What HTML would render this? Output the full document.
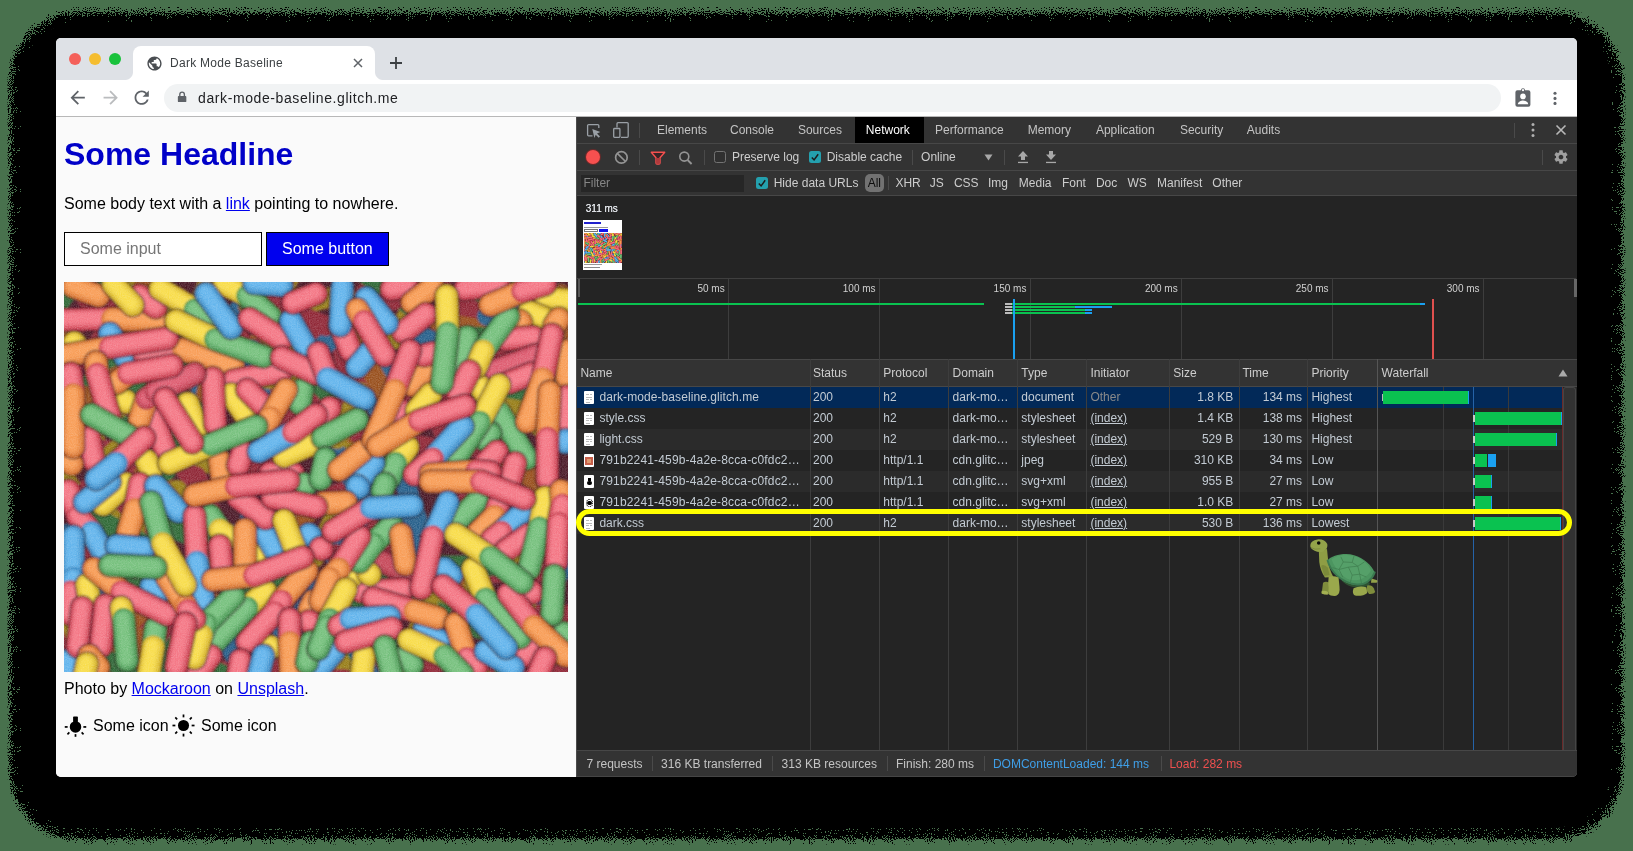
<!DOCTYPE html>
<html><head><meta charset="utf-8"><title>Dark Mode Baseline</title>
<style>
*{box-sizing:border-box;margin:0;padding:0}
html,body{width:1633px;height:851px;overflow:hidden}
body{background:#48714d;font-family:"Liberation Sans",sans-serif;position:relative}
.abs,.t{position:absolute}
.t{white-space:nowrap;line-height:20px;font-size:12px}
#shadow{position:absolute;left:16px;top:18px;width:1600px;height:815px;background:#000;border-radius:63px;box-shadow:0 0 8px 5.5px #000}
#win{opacity:.9999;position:absolute;left:56px;top:38px;width:1521px;height:739px;border-radius:5px;overflow:hidden;background:#fafafa}
/* browser chrome */
#tabstrip{position:absolute;left:0;top:0;width:1521px;height:42px;background:#dee1e6}
#tab{position:absolute;left:77px;top:8px;width:242px;height:34px;background:#fff;border-radius:8px 8px 0 0}
#toolbar{position:absolute;left:0;top:42px;width:1521px;height:37px;background:#fff;border-bottom:1px solid #b8b8b8}
#omni{position:absolute;left:108px;top:4px;width:1337px;height:28px;border-radius:14px;background:#f1f3f4}
.tl{position:absolute;top:15px;width:12px;height:12px;border-radius:50%}
/* page */
#page{position:absolute;left:0;top:79px;width:520px;height:660px;background:#fafafa;color:#000}
#page .t{font-size:16px;line-height:20px}
a.l{color:#0000ee;text-decoration:underline}
/* devtools */
#dt{position:absolute;left:520px;top:79px;width:1001px;height:660px;background:#242424;color:#ccc}
#dt .t{color:#cdcdcd;margin-left:-0.6px}
#dt .row .t{color:#c3cbd3}
.bar{position:absolute;left:0;width:1001px;background:#333}
.vsep{position:absolute;width:1px;background:#4a4a4a}
.cb{position:absolute;width:12px;height:12px;border-radius:2.5px}
.row{position:absolute;left:0;width:986px;height:21px}
.fi{position:absolute;left:8px;top:4px;width:10.200px;height:13px;background:#fff;border-radius:1px}
.fi i{position:absolute;left:2px;height:1px;background:#bbb}
.col{position:absolute;top:242px;width:1px;height:392px;background:#3d3d3d}
.bar2{position:absolute;height:12.600px;background:#06c354}
</style></head><body>
<svg class="abs" style="left:0;top:0" width="1633" height="851" viewBox="0 0 1633 851"><defs><filter id="dith" filterUnits="userSpaceOnUse" x="0" y="0" width="1633" height="851" color-interpolation-filters="sRGB"><feGaussianBlur in="SourceAlpha" stdDeviation="3.800" result="b"/><feTurbulence type="fractalNoise" baseFrequency="0.95" numOctaves="1" seed="11" result="n"/><feColorMatrix in="n" type="matrix" values="0 0 0 0 0  0 0 0 0 0  0 0 0 0 0  2.6 0 0 0 -0.8" result="na"/><feComposite in="b" in2="na" operator="arithmetic" k1="0" k2="1" k3="1" k4="-1" result="s"/><feComponentTransfer in="s"><feFuncA type="linear" slope="400" intercept="0"/></feComponentTransfer></filter><clipPath id="shc"><rect x="7.500" y="7" width="1618" height="837.500" rx="72"/></clipPath></defs><g clip-path="url(#shc)"><rect x="10.300" y="13" width="1611.400" height="826" rx="68" fill="#000" filter="url(#dith)"/></g><rect x="21" y="22" width="1590" height="806" rx="58" fill="#000"/></svg>
<div id="win">
<div id="tabstrip">
 <div class="tl" style="left:13px;background:#f4605a"></div>
 <div class="tl" style="left:33px;background:#f5bd2f"></div>
 <div class="tl" style="left:53px;background:#19c23c"></div>
 <div class="abs" style="left:69px;top:34px;width:8px;height:8px;background:radial-gradient(circle at 0 0,rgba(255,255,255,0) 7.5px,#fff 8.5px)"></div>
 <div class="abs" style="left:319px;top:34px;width:8px;height:8px;background:radial-gradient(circle at 100% 0,rgba(255,255,255,0) 7.5px,#fff 8.5px)"></div>
 <div id="tab"></div>
 <svg class="abs" style="left:89.500px;top:16.500px" width="17" height="17" viewBox="0 0 24 24"><path fill="#4a4d51" d="M12 2C6.48 2 2 6.48 2 12s4.48 10 10 10 10-4.48 10-10S17.52 2 12 2zm-1 17.93c-3.95-.49-7-3.85-7-7.93 0-.62.08-1.21.21-1.79L9 15v1c0 1.1.9 2 2 2v1.93zm6.9-2.54c-.26-.81-1-1.39-1.9-1.39h-1v-3c0-.55-.45-1-1-1H8v-2h2c.55 0 1-.45 1-1V7h2c1.100 0 2-.9 2-2v-.41c2.930 1.190 5 4.060 5 7.410 0 2.080-.8 3.970-2.100 5.390z"/></svg>
 <div class="t" style="left:114px;top:15px;font-size:12px;color:#3c4043;letter-spacing:0.27px">Dark Mode Baseline</div>
 <svg class="abs" style="left:296px;top:19px" width="12" height="12" viewBox="0 0 12 12"><path d="M2 2l8 8M10 2l-8 8" stroke="#5f6368" stroke-width="1.5" fill="none"/></svg>
 <svg class="abs" style="left:333px;top:18px" width="14" height="14" viewBox="0 0 14 14"><path d="M7 1v12M1 7h12" stroke="#3c4043" stroke-width="1.8" fill="none"/></svg>
</div>
<div id="toolbar">
 <svg class="abs" style="left:11.300px;top:7.300px" width="21.400" height="21.400" viewBox="0 0 24 24"><path fill="#5f6368" d="M20 11H7.830l5.590-5.590L12 4l-8 8 8 8 1.410-1.410L7.830 13H20v-2z"/></svg>
 <svg class="abs" style="left:43.500px;top:7.300px" width="21.400" height="21.400" viewBox="0 0 24 24"><path fill="#babcbe" d="M12 4l-1.410 1.410L16.170 11H4v2h12.170l-5.580 5.590L12 20l8-8z"/></svg>
 <svg class="abs" style="left:75.300px;top:7.300px" width="21.400" height="21.400" viewBox="0 0 24 24"><path fill="#5f6368" d="M17.650 6.350C16.200 4.900 14.210 4 12 4c-4.420 0-7.990 3.580-7.990 8s3.570 8 7.990 8c3.730 0 6.840-2.550 7.730-6h-2.080c-.82 2.330-3.040 4-5.650 4-3.310 0-6-2.690-6-6s2.690-6 6-6c1.660 0 3.140.69 4.220 1.780L13 11h7V4l-2.350 2.350z"/></svg>
 <div id="omni"></div>
 <svg class="abs" style="left:121px;top:11.300px" width="10.200" height="11.900" viewBox="0 0 12 14"><path fill="#5f6368" d="M2.500 6V4a3.500 3.500 0 0 1 7 0v2h.5a1 1 0 0 1 1 1v5a1 1 0 0 1-1 1H2a1 1 0 0 1-1-1V7a1 1 0 0 1 1-1zm1.600 0h3.800V4a1.900 1.900 0 0 0-3.800 0z"/></svg>
 <div class="t" style="left:142px;top:8px;font-size:14px;color:#202124;letter-spacing:0.6px">dark-mode-baseline.glitch.me</div>
 <svg class="abs" style="left:1458px;top:8px" width="18" height="20" viewBox="0 0 18 20"><path fill="#5f6368" d="M7 2.300a2 2 0 0 1 4 0H14.400a2 2 0 0 1 2 2V16.800a2 2 0 0 1-2 2H3.400a2 2 0 0 1-2-2V4.300a2 2 0 0 1 2-2z"/><circle cx="9" cy="2.200" r="1.100" fill="#fff"/><circle cx="9" cy="8.400" r="2.800" fill="#fff"/><path fill="#fff" d="M3.800 16.300c0-2.600 3.400-3.900 5.200-3.900s5.200 1.300 5.200 3.900z"/></svg>
 <svg class="abs" style="left:1497px;top:9px" width="4" height="18" viewBox="0 0 4 18"><circle cx="2" cy="4.300" r="1.550" fill="#5f6368"/><circle cx="2" cy="9.400" r="1.550" fill="#5f6368"/><circle cx="2" cy="14.400" r="1.550" fill="#5f6368"/></svg>
</div>
<div id="page">
 <div class="t" style="left:8px;top:18.700px;font-size:32px;line-height:37px;font-weight:bold;color:#0000c8">Some Headline</div>
 <div class="t" style="left:8px;top:77px">Some body text with a <a class="l">link</a> pointing to nowhere.</div>
 <div class="abs" style="left:8px;top:115px;width:198px;height:34px;background:#fff;border:1px solid #000"></div>
 <div class="t" style="left:24px;top:122px;color:#767676">Some input</div>
 <div class="abs" style="left:210px;top:115px;width:123px;height:34px;background:#0000ee;border:1px solid #000"></div>
 <div class="t" style="left:226px;top:122px;color:#fff">Some button</div>
 <div class="abs" style="left:8px;top:165px;width:504px;height:390px;background:#c86a78;overflow:hidden">
<svg width="504" height="390" viewBox="0 0 504 390" style="position:absolute;left:0;top:0">
<defs><filter id="sug" x="0" y="0" width="100%" height="100%"><feTurbulence type="fractalNoise" baseFrequency="0.9" numOctaves="2" seed="3" result="n"/><feColorMatrix in="n" type="matrix" values="0 0 0 0 1  0 0 0 0 1  0 0 0 0 1  0.9 0.9 0 0 -0.62" result="w"/><feComposite in="w" in2="SourceGraphic" operator="over"/></filter><filter id="bl"><feGaussianBlur stdDeviation="0.9"/></filter><filter id="hb" x="-50%" y="-50%" width="200%" height="200%"><feGaussianBlur stdDeviation="2.6"/></filter></defs>
<rect width="504" height="390" fill="#4a1826"/>
<g id="cg" stroke-linecap="round" stroke-linejoin="round" fill="none" filter="url(#bl)">
<path d="M169 35L151 69" stroke="#977d18" stroke-width="20"/>
<path d="M60 223L18 235" stroke="#8f2634" stroke-width="20"/>
<path d="M193 11L242 26" stroke="#984f1e" stroke-width="20"/>
<path d="M298 352L275 405" stroke="#8f2634" stroke-width="20"/>
<path d="M311 151L274 154" stroke="#984f1e" stroke-width="20"/>
<path d="M63 134L56 190" stroke="#977d18" stroke-width="20"/>
<path d="M425 36L410 93" stroke="#8f2634" stroke-width="20"/>
<path d="M47 253L35 311" stroke="#255e8a" stroke-width="20"/>
<path d="M331 142L362 189" stroke="#255e8a" stroke-width="20"/>
<path d="M152 75L207 109" stroke="#8f2634" stroke-width="20"/>
<path d="M320 193L262 217" stroke="#8f2634" stroke-width="20"/>
<path d="M310 -1L308 41" stroke="#8f2634" stroke-width="20"/>
<path d="M40 187L99 194" stroke="#984f1e" stroke-width="20"/>
<path d="M303 300L262 327" stroke="#8f2634" stroke-width="20"/>
<path d="M297 195L306 261" stroke="#8f2634" stroke-width="20"/>
<path d="M208 257L268 268" stroke="#2f6835" stroke-width="20"/>
<path d="M288 239L298 300" stroke="#2f6835" stroke-width="20"/>
<path d="M159 350L185 402" stroke="#255e8a" stroke-width="20"/>
<path d="M0 296L42 314" stroke="#255e8a" stroke-width="20"/>
<path d="M449 181L492 206" stroke="#8f2634" stroke-width="20"/>
<path d="M474 316L432 335" stroke="#255e8a" stroke-width="20"/>
<path d="M499 249L515 291" stroke="#8f2634" stroke-width="20"/>
<path d="M62 67L102 103" stroke="#977d18" stroke-width="20"/>
<path d="M61 93L110 118" stroke="#977d18" stroke-width="20"/>
<path d="M302 358L271 403" stroke="#977d18" stroke-width="20"/>
<path d="M329 260L338 327" stroke="#984f1e" stroke-width="20"/>
<path d="M339 195L355 243" stroke="#255e8a" stroke-width="20"/>
<path d="M301 11L344 20" stroke="#8f2634" stroke-width="20"/>
<path d="M21 227L74 245" stroke="#977d18" stroke-width="20"/>
<path d="M10 136L77 142" stroke="#977d18" stroke-width="20"/>
<path d="M216 246L159 254" stroke="#255e8a" stroke-width="20"/>
<path d="M81 337L28 339" stroke="#255e8a" stroke-width="20"/>
<path d="M176 27L131 71" stroke="#255e8a" stroke-width="20"/>
<path d="M389 54L459 59" stroke="#977d18" stroke-width="20"/>
<path d="M210 264L149 281" stroke="#8f2634" stroke-width="20"/>
<path d="M516 325L490 362" stroke="#8f2634" stroke-width="20"/>
<path d="M445 118L487 154" stroke="#977d18" stroke-width="20"/>
<path d="M192 62L133 101" stroke="#984f1e" stroke-width="20"/>
<path d="M82 57L102 119" stroke="#8f2634" stroke-width="20"/>
<path d="M243 134L280 137" stroke="#8f2634" stroke-width="20"/>
<path d="M245 47L230 92" stroke="#984f1e" stroke-width="20"/>
<path d="M505 392L457 399" stroke="#8f2634" stroke-width="20"/>
<path d="M31 159L57 206" stroke="#977d18" stroke-width="20"/>
<path d="M445 158L415 215" stroke="#8f2634" stroke-width="20"/>
<path d="M417 10L438 68" stroke="#8f2634" stroke-width="20"/>
<path d="M259 48L222 78" stroke="#984f1e" stroke-width="20"/>
<path d="M482 255L489 317" stroke="#8f2634" stroke-width="20"/>
<path d="M351 52L389 68" stroke="#255e8a" stroke-width="20"/>
<path d="M443 31L382 68" stroke="#2f6835" stroke-width="20"/>
<path d="M484 36L478 72" stroke="#984f1e" stroke-width="20"/>
<path d="M502 222L496 291" stroke="#255e8a" stroke-width="20"/>
<path d="M524 63L490 77" stroke="#8f2634" stroke-width="20"/>
<path d="M150 67L137 110" stroke="#255e8a" stroke-width="20"/>
<path d="M450 -10L404 40" stroke="#2f6835" stroke-width="20"/>
<path d="M287 327L304 394" stroke="#977d18" stroke-width="20"/>
<path d="M60 19L57 86" stroke="#984f1e" stroke-width="20"/>
<path d="M103 -21L69 4" stroke="#255e8a" stroke-width="20"/>
<path d="M285 33L344 45" stroke="#977d18" stroke-width="20"/>
<path d="M255 302L308 321" stroke="#8f2634" stroke-width="20"/>
<path d="M65 -1L115 15" stroke="#8f2634" stroke-width="20"/>
<path d="M383 336L393 393" stroke="#977d18" stroke-width="20"/>
<path d="M290 51L325 93" stroke="#984f1e" stroke-width="20"/>
<path d="M260 349L221 403" stroke="#8f2634" stroke-width="20"/>
<path d="M453 341L494 372" stroke="#255e8a" stroke-width="20"/>
<path d="M32 166L75 176" stroke="#8f2634" stroke-width="20"/>
<path d="M72 102L131 126" stroke="#2f6835" stroke-width="20"/>
<path d="M313 126L342 155" stroke="#255e8a" stroke-width="20"/>
<path d="M97 355L113 406" stroke="#2f6835" stroke-width="20"/>
<path d="M420 30L432 83" stroke="#8f2634" stroke-width="20"/>
<path d="M187 129L234 143" stroke="#8f2634" stroke-width="20"/>
<path d="M256 169L304 172" stroke="#977d18" stroke-width="20"/>
<path d="M112 372L177 396" stroke="#8f2634" stroke-width="20"/>
<path d="M487 19L512 47" stroke="#984f1e" stroke-width="20"/>
<path d="M113 282L57 318" stroke="#2f6835" stroke-width="20"/>
<path d="M388 80L450 112" stroke="#977d18" stroke-width="20"/>
<path d="M228 99L270 149" stroke="#8f2634" stroke-width="20"/>
<path d="M242 14L184 25" stroke="#984f1e" stroke-width="20"/>
<path d="M109 225L144 254" stroke="#8f2634" stroke-width="20"/>
<path d="M234 95L222 163" stroke="#8f2634" stroke-width="20"/>
<path d="M337 -20L294 35" stroke="#8f2634" stroke-width="20"/>
<path d="M156 58L99 70" stroke="#977d18" stroke-width="20"/>
<path d="M388 88L388 130" stroke="#8f2634" stroke-width="20"/>
<path d="M393 396L429 400" stroke="#977d18" stroke-width="20"/>
<path d="M276 33L282 102" stroke="#8f2634" stroke-width="20"/>
<path d="M348 232L322 281" stroke="#255e8a" stroke-width="20"/>
<path d="M481 102L516 130" stroke="#8f2634" stroke-width="20"/>
<path d="M437 257L416 303" stroke="#8f2634" stroke-width="20"/>
<path d="M475 332L534 334" stroke="#8f2634" stroke-width="20"/>
<path d="M228 -9L203 34" stroke="#977d18" stroke-width="20"/>
<path d="M325 90L358 122" stroke="#255e8a" stroke-width="20"/>
<path d="M63 100L112 101" stroke="#8f2634" stroke-width="20"/>
<path d="M474 190L525 239" stroke="#8f2634" stroke-width="20"/>
<path d="M95 48L114 82" stroke="#8f2634" stroke-width="20"/>
<path d="M254 54L253 90" stroke="#8f2634" stroke-width="20"/>
<path d="M425 25L411 73" stroke="#8f2634" stroke-width="20"/>
<path d="M157 59L142 112" stroke="#984f1e" stroke-width="20"/>
<path d="M94 338L49 374" stroke="#984f1e" stroke-width="20"/>
<path d="M133 380L189 408" stroke="#2f6835" stroke-width="20"/>
<path d="M83 307L49 349" stroke="#255e8a" stroke-width="20"/>
<path d="M350 311L399 335" stroke="#977d18" stroke-width="20"/>
<path d="M258 322L318 325" stroke="#984f1e" stroke-width="20"/>
<path d="M470 252L445 288" stroke="#8f2634" stroke-width="20"/>
<path d="M37 248L-13 254" stroke="#255e8a" stroke-width="20"/>
<path d="M294 219L271 275" stroke="#255e8a" stroke-width="20"/>
<path d="M94 170L162 185" stroke="#977d18" stroke-width="20"/>
<path d="M57 187L20 225" stroke="#984f1e" stroke-width="20"/>
<path d="M43 83L15 115" stroke="#2f6835" stroke-width="20"/>
<path d="M348 170L313 188" stroke="#2f6835" stroke-width="20"/>
<path d="M149 -11L132 29" stroke="#977d18" stroke-width="20"/>
<path d="M83 77L51 111" stroke="#977d18" stroke-width="20"/>
<path d="M58 152L62 223" stroke="#8f2634" stroke-width="20"/>
<path d="M336 245L369 289" stroke="#255e8a" stroke-width="20"/>
<path d="M262 304L206 305" stroke="#8f2634" stroke-width="20"/>
<path d="M476 372L529 375" stroke="#984f1e" stroke-width="20"/>
<path d="M280 397L231 398" stroke="#8f2634" stroke-width="20"/>
<path d="M45 11L13 43" stroke="#8f2634" stroke-width="20"/>
<path d="M60 292L59 360" stroke="#2f6835" stroke-width="20"/>
<path d="M205 185L158 204" stroke="#8f2634" stroke-width="20"/>
<path d="M-12 168L-5 215" stroke="#8f2634" stroke-width="20"/>
<path d="M186 135L230 153" stroke="#8f2634" stroke-width="20"/>
<path d="M351 321L416 347" stroke="#2f6835" stroke-width="20"/>
<path d="M-17 280L10 307" stroke="#255e8a" stroke-width="20"/>
<path d="M502 208L524 255" stroke="#8f2634" stroke-width="20"/>
<path d="M408 100L467 110" stroke="#2f6835" stroke-width="20"/>
<path d="M462 72L499 112" stroke="#8f2634" stroke-width="20"/>
<path d="M391 294L399 330" stroke="#984f1e" stroke-width="20"/>
<path d="M348 359L293 370" stroke="#2f6835" stroke-width="20"/>
<path d="M24 345L40 401" stroke="#8f2634" stroke-width="20"/>
<path d="M293 102L362 113" stroke="#8f2634" stroke-width="20"/>
<path d="M65 143L94 178" stroke="#2f6835" stroke-width="20"/>
<path d="M513 76L491 117" stroke="#977d18" stroke-width="20"/>
<path d="M349 22L332 57" stroke="#977d18" stroke-width="20"/>
<path d="M438 172L491 216" stroke="#984f1e" stroke-width="20"/>
<path d="M210 36L242 58" stroke="#8f2634" stroke-width="20"/>
<path d="M268 91L294 151" stroke="#8f2634" stroke-width="20"/>
<path d="M448 273L462 322" stroke="#977d18" stroke-width="20"/>
<path d="M119 82L81 120" stroke="#977d18" stroke-width="20"/>
<path d="M497 12L497 71" stroke="#984f1e" stroke-width="20"/>
<path d="M458 20L411 36" stroke="#2f6835" stroke-width="20"/>
<path d="M254 366L194 397" stroke="#8f2634" stroke-width="20"/>
<path d="M81 142L33 186" stroke="#977d18" stroke-width="20"/>
<path d="M281 12L213 28" stroke="#977d18" stroke-width="20"/>
<path d="M424 375L452 403" stroke="#8f2634" stroke-width="20"/>
<path d="M39 377L101 399" stroke="#2f6835" stroke-width="20"/>
<path d="M325 276L333 331" stroke="#8f2634" stroke-width="20"/>
<path d="M-5 23L-13 60" stroke="#2f6835" stroke-width="20"/>
<path d="M128 22L170 63" stroke="#2f6835" stroke-width="20"/>
<path d="M370 2L411 59" stroke="#8f2634" stroke-width="20"/>
<path d="M199 64L188 99" stroke="#8f2634" stroke-width="20"/>
<path d="M494 76L530 132" stroke="#8f2634" stroke-width="20"/>
<path d="M214 62L264 111" stroke="#2f6835" stroke-width="20"/>
<path d="M303 -7L358 32" stroke="#2f6835" stroke-width="20"/>
<path d="M227 66L193 125" stroke="#8f2634" stroke-width="20"/>
<path d="M264 256L233 294" stroke="#255e8a" stroke-width="20"/>
<path d="M112 297L75 337" stroke="#8f2634" stroke-width="20"/>
<path d="M266 58L234 87" stroke="#255e8a" stroke-width="20"/>
<path d="M85 274L127 330" stroke="#255e8a" stroke-width="20"/>
<path d="M308 323L311 392" stroke="#8f2634" stroke-width="20"/>
<path d="M480 29L494 71" stroke="#977d18" stroke-width="20"/>
<path d="M40 7L89 16" stroke="#2f6835" stroke-width="20"/>
<path d="M488 290L418 291" stroke="#8f2634" stroke-width="20"/>
<path d="M92 231L88 284" stroke="#8f2634" stroke-width="20"/>
<path d="M329 123L347 167" stroke="#8f2634" stroke-width="20"/>
<path d="M22 16L72 28" stroke="#8f2634" stroke-width="20"/>
<path d="M272 272L296 331" stroke="#8f2634" stroke-width="20"/>
<path d="M395 163L447 171" stroke="#8f2634" stroke-width="20"/>
<path d="M257 146L290 200" stroke="#255e8a" stroke-width="20"/>
<path d="M32 141L-21 176" stroke="#8f2634" stroke-width="20"/>
<path d="M202 169L171 191" stroke="#8f2634" stroke-width="20"/>
<path d="M370 338L393 378" stroke="#977d18" stroke-width="20"/>
<path d="M32 267L-7 325" stroke="#8f2634" stroke-width="20"/>
<path d="M20 292L-36 307" stroke="#8f2634" stroke-width="20"/>
<path d="M-0 51L5 121" stroke="#984f1e" stroke-width="20"/>
<path d="M187 67L198 119" stroke="#255e8a" stroke-width="20"/>
<path d="M108 295L64 343" stroke="#984f1e" stroke-width="20"/>
<path d="M93 76L45 98" stroke="#984f1e" stroke-width="20"/>
<path d="M374 4L426 41" stroke="#8f2634" stroke-width="20"/>
<path d="M202 229L205 284" stroke="#8f2634" stroke-width="20"/>
<path d="M526 351L481 353" stroke="#8f2634" stroke-width="20"/>
<path d="M135 161L64 164" stroke="#8f2634" stroke-width="20"/>
<path d="M124 133L102 189" stroke="#2f6835" stroke-width="20"/>
<path d="M296 285L249 329" stroke="#8f2634" stroke-width="20"/>
<path d="M132 194L156 251" stroke="#8f2634" stroke-width="20"/>
<path d="M203 51L237 82" stroke="#977d18" stroke-width="20"/>
<path d="M73 1L104 33" stroke="#977d18" stroke-width="20"/>
<path d="M128 290L95 353" stroke="#8f2634" stroke-width="20"/>
<path d="M-27 335L12 369" stroke="#8f2634" stroke-width="20"/>
<path d="M-9 103L31 118" stroke="#984f1e" stroke-width="20"/>
<path d="M282 340L309 402" stroke="#255e8a" stroke-width="20"/>
<path d="M315 292L297 323" stroke="#2f6835" stroke-width="20"/>
<path d="M283 229L321 260" stroke="#8f2634" stroke-width="20"/>
<path d="M-18 396L44 404" stroke="#8f2634" stroke-width="20"/>
<path d="M410 302L424 349" stroke="#977d18" stroke-width="20"/>
<path d="M176 57L131 90" stroke="#8f2634" stroke-width="20"/>
<path d="M214 298L194 334" stroke="#977d18" stroke-width="20"/>
<path d="M52 36L23 78" stroke="#8f2634" stroke-width="20"/>
<path d="M309 156L371 166" stroke="#8f2634" stroke-width="20"/>
<path d="M231 -24L183 19" stroke="#2f6835" stroke-width="20"/>
<path d="M79 278L108 299" stroke="#8f2634" stroke-width="20"/>
<path d="M202 294L222 359" stroke="#255e8a" stroke-width="20"/>
<path d="M375 40L415 47" stroke="#984f1e" stroke-width="20"/>
<path d="M476 4L457 49" stroke="#977d18" stroke-width="20"/>
<path d="M62 122L98 143" stroke="#8f2634" stroke-width="20"/>
<path d="M76 171L18 211" stroke="#8f2634" stroke-width="20"/>
<path d="M114 329L182 338" stroke="#8f2634" stroke-width="20"/>
<path d="M6 338L30 402" stroke="#977d18" stroke-width="20"/>
<path d="M365 325L336 386" stroke="#977d18" stroke-width="20"/>
<path d="M220 326L184 348" stroke="#8f2634" stroke-width="20"/>
<path d="M-10 363L33 386" stroke="#8f2634" stroke-width="20"/>
<path d="M137 281L102 293" stroke="#977d18" stroke-width="20"/>
<path d="M443 245L419 286" stroke="#255e8a" stroke-width="20"/>
<path d="M313 194L295 237" stroke="#255e8a" stroke-width="20"/>
<path d="M143 69L160 115" stroke="#977d18" stroke-width="20"/>
<path d="M229 -25L210 25" stroke="#8f2634" stroke-width="20"/>
<path d="M252 226L196 261" stroke="#984f1e" stroke-width="20"/>
<path d="M214 24L262 44" stroke="#8f2634" stroke-width="20"/>
<path d="M419 180L402 213" stroke="#8f2634" stroke-width="20"/>
<path d="M54 273L12 308" stroke="#8f2634" stroke-width="20"/>
<path d="M399 328L369 385" stroke="#8f2634" stroke-width="20"/>
<path d="M461 374L417 423" stroke="#8f2634" stroke-width="20"/>
<path d="M39 328L79 379" stroke="#984f1e" stroke-width="20"/>
<path d="M95 309L58 317" stroke="#8f2634" stroke-width="20"/>
<path d="M295 69L325 118" stroke="#984f1e" stroke-width="20"/>
<path d="M256 91L203 97" stroke="#977d18" stroke-width="20"/>
<path d="M118 182L138 213" stroke="#8f2634" stroke-width="20"/>
<path d="M186 233L217 269" stroke="#255e8a" stroke-width="20"/>
<path d="M53 302L104 322" stroke="#2f6835" stroke-width="20"/>
<path d="M436 359L444 413" stroke="#2f6835" stroke-width="20"/>
<path d="M482 32L423 34" stroke="#255e8a" stroke-width="20"/>
<path d="M367 120L386 165" stroke="#8f2634" stroke-width="20"/>
<path d="M175 283L183 324" stroke="#2f6835" stroke-width="20"/>
<path d="M493 88L491 135" stroke="#984f1e" stroke-width="20"/>
<path d="M287 247L307 277" stroke="#8f2634" stroke-width="20"/>
<path d="M116 86L96 133" stroke="#8f2634" stroke-width="20"/>
<path d="M437 25L482 64" stroke="#8f2634" stroke-width="20"/>
<path d="M3 200L34 245" stroke="#977d18" stroke-width="20"/>
<path d="M113 208L102 250" stroke="#977d18" stroke-width="20"/>
<path d="M392 54L457 56" stroke="#2f6835" stroke-width="20"/>
<path d="M82 -1L54 60" stroke="#984f1e" stroke-width="20"/>
<path d="M150 321L112 325" stroke="#984f1e" stroke-width="20"/>
<path d="M296 110L273 157" stroke="#977d18" stroke-width="20"/>
<path d="M392 86L356 97" stroke="#977d18" stroke-width="20"/>
<path d="M-27 50L33 83" stroke="#8f2634" stroke-width="20"/>
<path d="M17 212L-24 220" stroke="#8f2634" stroke-width="20"/>
<path d="M273 231L250 276" stroke="#977d18" stroke-width="20"/>
<path d="M70 102L93 132" stroke="#2f6835" stroke-width="20"/>
<path d="M367 283L433 284" stroke="#2f6835" stroke-width="20"/>
<path d="M478 4L458 42" stroke="#8f2634" stroke-width="20"/>
<path d="M95 241L159 267" stroke="#2f6835" stroke-width="20"/>
<path d="M455 93L513 103" stroke="#2f6835" stroke-width="20"/>
<path d="M220 291L217 336" stroke="#2f6835" stroke-width="20"/>
<path d="M450 349L503 364" stroke="#8f2634" stroke-width="20"/>
<path d="M151 62L102 112" stroke="#2f6835" stroke-width="20"/>
<path d="M460 42L479 96" stroke="#255e8a" stroke-width="20"/>
<path d="M483 224L448 273" stroke="#977d18" stroke-width="20"/>
<path d="M255 307L217 361" stroke="#255e8a" stroke-width="20"/>
<path d="M521 74L461 97" stroke="#255e8a" stroke-width="20"/>
<path d="M336 16L296 28" stroke="#8f2634" stroke-width="20"/>
<path d="M18 228L80 262" stroke="#2f6835" stroke-width="20"/>
<path d="M22 -17L-12 31" stroke="#2f6835" stroke-width="20"/>
<path d="M0.0 37.8L48.1 36.7L96.2 38.9" stroke="rgba(30,5,15,.5)" stroke-width="25.5"/>
<path d="M0.0 37.8L48.1 36.7" stroke="#c23447" stroke-width="22"/>
<path d="M-0.4 37.4L47.7 36.2" stroke="#d85262" stroke-width="18.5"/>
<path d="M-0.7 36.9L47.4 35.8" stroke="#ea6978" stroke-width="14.5"/>
<path d="M-1.1 36.5L47.0 35.3" stroke="#f47684" stroke-width="10"/>
<path d="M48.1 36.7L96.2 38.9" stroke="#cf6b29" stroke-width="22"/>
<path d="M47.7 36.2L95.9 38.5" stroke="#e1813c" stroke-width="18.5"/>
<path d="M47.4 35.8L95.5 38.0" stroke="#f0924b" stroke-width="14.5"/>
<path d="M47.0 35.3L95.1 37.6" stroke="#f89c54" stroke-width="10"/>
<path d="M9.2 4.6L34.4 13.7" stroke="rgba(30,5,15,.5)" stroke-width="25.5"/>
<path d="M9.2 4.6L34.4 13.7" stroke="#cf6b29" stroke-width="22"/>
<path d="M8.8 4.1L34.0 13.3" stroke="#e1813c" stroke-width="18.5"/>
<path d="M8.4 3.7L33.6 12.8" stroke="#f0924b" stroke-width="14.5"/>
<path d="M8.1 3.2L33.3 12.4" stroke="#f89c54" stroke-width="10"/>
<path d="M75.6 13.7L91.6 25.2" stroke="rgba(30,5,15,.5)" stroke-width="25.5"/>
<path d="M75.6 13.7L91.6 25.2" stroke="#c23447" stroke-width="22"/>
<path d="M75.2 13.3L91.3 24.8" stroke="#d85262" stroke-width="18.5"/>
<path d="M74.9 12.8L90.9 24.3" stroke="#ea6978" stroke-width="14.5"/>
<path d="M74.5 12.4L90.6 23.9" stroke="#f47684" stroke-width="10"/>
<path d="M45.8 51.5L61.9 75.6" stroke="rgba(30,5,15,.5)" stroke-width="25.5"/>
<path d="M45.8 51.5L61.9 75.6" stroke="#3280bb" stroke-width="22"/>
<path d="M45.5 51.1L61.5 75.2" stroke="#4897d1" stroke-width="18.5"/>
<path d="M45.1 50.6L61.1 74.7" stroke="#58aae2" stroke-width="14.5"/>
<path d="M44.7 50.2L60.8 74.3" stroke="#62b4ec" stroke-width="10"/>
<path d="M10.3 60.7L11.5 61.9" stroke="rgba(30,5,15,.5)" stroke-width="25.5"/>
<path d="M10.3 60.7L11.5 61.9" stroke="#cdaa21" stroke-width="22"/>
<path d="M9.9 60.3L11.1 61.4" stroke="#e0c033" stroke-width="18.5"/>
<path d="M9.6 59.8L10.7 61.0" stroke="#efd242" stroke-width="14.5"/>
<path d="M9.2 59.4L10.4 60.5" stroke="#f8dc4a" stroke-width="10"/>
<path d="M80.2 72.2L119.1 67.6L169.5 84.8" stroke="rgba(30,5,15,.5)" stroke-width="25.5"/>
<path d="M80.2 72.2L119.1 67.6" stroke="#c23447" stroke-width="22"/>
<path d="M79.8 71.7L118.8 67.1" stroke="#d85262" stroke-width="18.5"/>
<path d="M79.5 71.3L118.4 66.7" stroke="#ea6978" stroke-width="14.5"/>
<path d="M79.1 70.8L118.0 66.2" stroke="#f47684" stroke-width="10"/>
<path d="M119.1 67.6L169.5 84.8" stroke="#cf6b29" stroke-width="22"/>
<path d="M118.8 67.1L169.2 84.3" stroke="#e1813c" stroke-width="18.5"/>
<path d="M118.4 66.7L168.8 83.9" stroke="#f0924b" stroke-width="14.5"/>
<path d="M118.0 66.2L168.5 83.4" stroke="#f89c54" stroke-width="10"/>
<path d="M96.2 6.9L130.6 27.5L146.6 36.7" stroke="rgba(30,5,15,.5)" stroke-width="25.5"/>
<path d="M96.2 6.9L130.6 27.5" stroke="#cdaa21" stroke-width="22"/>
<path d="M95.9 6.4L130.2 27.0" stroke="#e0c033" stroke-width="18.5"/>
<path d="M95.5 6.0L129.9 26.6" stroke="#efd242" stroke-width="14.5"/>
<path d="M95.1 5.5L129.5 26.1" stroke="#f8dc4a" stroke-width="10"/>
<path d="M130.6 27.5L146.6 36.7" stroke="#408d49" stroke-width="22"/>
<path d="M130.2 27.0L146.3 36.2" stroke="#57a460" stroke-width="18.5"/>
<path d="M129.9 26.6L145.9 35.8" stroke="#6ab672" stroke-width="14.5"/>
<path d="M129.5 26.1L145.5 35.3" stroke="#74c07c" stroke-width="10"/>
<path d="M160.4 2.3L183.3 13.7L206.2 34.4" stroke="rgba(30,5,15,.5)" stroke-width="25.5"/>
<path d="M160.4 2.3L183.3 13.7" stroke="#cdaa21" stroke-width="22"/>
<path d="M160.0 1.8L182.9 13.3" stroke="#e0c033" stroke-width="18.5"/>
<path d="M159.6 1.4L182.6 12.8" stroke="#efd242" stroke-width="14.5"/>
<path d="M159.3 0.9L182.2 12.4" stroke="#f8dc4a" stroke-width="10"/>
<path d="M183.3 13.7L206.2 34.4" stroke="#408d49" stroke-width="22"/>
<path d="M182.9 13.3L205.8 33.9" stroke="#57a460" stroke-width="18.5"/>
<path d="M182.6 12.8L205.5 33.5" stroke="#6ab672" stroke-width="14.5"/>
<path d="M182.2 12.4L205.1 33.0" stroke="#74c07c" stroke-width="10"/>
<path d="M190.1 1.1L217.6 3.4" stroke="rgba(30,5,15,.5)" stroke-width="25.5"/>
<path d="M190.1 1.1L217.6 3.4" stroke="#3280bb" stroke-width="22"/>
<path d="M189.8 0.7L217.3 3.0" stroke="#4897d1" stroke-width="18.5"/>
<path d="M189.4 0.2L216.9 2.5" stroke="#58aae2" stroke-width="14.5"/>
<path d="M189.1 -0.2L216.6 2.1" stroke="#62b4ec" stroke-width="10"/>
<path d="M169.5 98.5L217.6 89.3" stroke="rgba(30,5,15,.5)" stroke-width="25.5"/>
<path d="M169.5 98.5L217.6 89.3" stroke="#c23447" stroke-width="22"/>
<path d="M169.2 98.1L217.3 88.9" stroke="#d85262" stroke-width="18.5"/>
<path d="M168.8 97.6L216.9 88.4" stroke="#ea6978" stroke-width="14.5"/>
<path d="M168.5 97.2L216.6 88.0" stroke="#f47684" stroke-width="10"/>
<path d="M167.2 112.3L181.0 132.9" stroke="rgba(30,5,15,.5)" stroke-width="25.5"/>
<path d="M167.2 112.3L181.0 132.9" stroke="#cdaa21" stroke-width="22"/>
<path d="M166.9 111.8L180.6 132.4" stroke="#e0c033" stroke-width="18.5"/>
<path d="M166.5 111.4L180.3 132.0" stroke="#efd242" stroke-width="14.5"/>
<path d="M166.2 110.9L179.9 131.5" stroke="#f8dc4a" stroke-width="10"/>
<path d="M123.7 121.4L132.9 146.6" stroke="rgba(30,5,15,.5)" stroke-width="25.5"/>
<path d="M123.7 121.4L132.9 146.6" stroke="#cdaa21" stroke-width="22"/>
<path d="M123.4 121.0L132.5 146.2" stroke="#e0c033" stroke-width="18.5"/>
<path d="M123.0 120.5L132.2 145.7" stroke="#efd242" stroke-width="14.5"/>
<path d="M122.6 120.1L131.8 145.3" stroke="#f8dc4a" stroke-width="10"/>
<path d="M89.3 135.2L100.8 167.2" stroke="rgba(30,5,15,.5)" stroke-width="25.5"/>
<path d="M89.3 135.2L100.8 167.2" stroke="#c23447" stroke-width="22"/>
<path d="M89.0 134.7L100.4 166.8" stroke="#d85262" stroke-width="18.5"/>
<path d="M88.6 134.3L100.1 166.3" stroke="#ea6978" stroke-width="14.5"/>
<path d="M88.3 133.8L99.7 165.9" stroke="#f47684" stroke-width="10"/>
<path d="M25.2 155.8L29.8 178.7" stroke="rgba(30,5,15,.5)" stroke-width="25.5"/>
<path d="M25.2 155.8L29.8 178.7" stroke="#c23447" stroke-width="22"/>
<path d="M24.8 155.3L29.4 178.2" stroke="#d85262" stroke-width="18.5"/>
<path d="M24.5 154.9L29.1 177.8" stroke="#ea6978" stroke-width="14.5"/>
<path d="M24.1 154.4L28.7 177.3" stroke="#f47684" stroke-width="10"/>
<path d="M61.9 119.1L63.0 120.3" stroke="rgba(30,5,15,.5)" stroke-width="25.5"/>
<path d="M61.9 119.1L63.0 120.3" stroke="#cdaa21" stroke-width="22"/>
<path d="M61.5 118.7L62.6 119.8" stroke="#e0c033" stroke-width="18.5"/>
<path d="M61.1 118.2L62.3 119.4" stroke="#efd242" stroke-width="14.5"/>
<path d="M60.8 117.8L61.9 118.9" stroke="#f8dc4a" stroke-width="10"/>
<path d="M82.5 178.7L87.1 187.9" stroke="rgba(30,5,15,.5)" stroke-width="25.5"/>
<path d="M82.5 178.7L87.1 187.9" stroke="#cdaa21" stroke-width="22"/>
<path d="M82.1 178.2L86.7 187.4" stroke="#e0c033" stroke-width="18.5"/>
<path d="M81.8 177.8L86.3 187.0" stroke="#efd242" stroke-width="14.5"/>
<path d="M81.4 177.3L86.0 186.5" stroke="#f8dc4a" stroke-width="10"/>
<path d="M6.9 181.0L8.0 182.1" stroke="rgba(30,5,15,.5)" stroke-width="25.5"/>
<path d="M6.9 181.0L8.0 182.1" stroke="#cf6b29" stroke-width="22"/>
<path d="M6.5 180.5L7.7 181.7" stroke="#e1813c" stroke-width="18.5"/>
<path d="M6.2 180.1L7.3 181.2" stroke="#f0924b" stroke-width="14.5"/>
<path d="M5.8 179.6L6.9 180.8" stroke="#f89c54" stroke-width="10"/>
<path d="M155.8 178.7L158.1 197.0" stroke="rgba(30,5,15,.5)" stroke-width="25.5"/>
<path d="M155.8 178.7L158.1 197.0" stroke="#cf6b29" stroke-width="22"/>
<path d="M155.4 178.2L157.7 196.6" stroke="#e1813c" stroke-width="18.5"/>
<path d="M155.1 177.8L157.4 196.1" stroke="#f0924b" stroke-width="14.5"/>
<path d="M154.7 177.3L157.0 195.7" stroke="#f89c54" stroke-width="10"/>
<path d="M178.7 169.5L174.1 183.3" stroke="rgba(30,5,15,.5)" stroke-width="25.5"/>
<path d="M178.7 169.5L174.1 183.3" stroke="#c23447" stroke-width="22"/>
<path d="M178.3 169.1L173.8 182.8" stroke="#d85262" stroke-width="18.5"/>
<path d="M178.0 168.6L173.4 182.4" stroke="#ea6978" stroke-width="14.5"/>
<path d="M177.6 168.2L173.0 181.9" stroke="#f47684" stroke-width="10"/>
<path d="M206.2 191.3L229.1 191.3" stroke="rgba(30,5,15,.5)" stroke-width="25.5"/>
<path d="M206.2 191.3L229.1 191.3" stroke="#c23447" stroke-width="22"/>
<path d="M205.8 190.8L228.7 190.8" stroke="#d85262" stroke-width="18.5"/>
<path d="M205.5 190.4L228.4 190.4" stroke="#ea6978" stroke-width="14.5"/>
<path d="M205.1 189.9L228.0 189.9" stroke="#f47684" stroke-width="10"/>
<path d="M219.9 174.1L252.0 160.4" stroke="rgba(30,5,15,.5)" stroke-width="25.5"/>
<path d="M219.9 174.1L252.0 160.4" stroke="#cdaa21" stroke-width="22"/>
<path d="M219.6 173.7L251.6 159.9" stroke="#e0c033" stroke-width="18.5"/>
<path d="M219.2 173.2L251.3 159.5" stroke="#efd242" stroke-width="14.5"/>
<path d="M218.9 172.8L250.9 159.0" stroke="#f8dc4a" stroke-width="10"/>
<path d="M238.3 107.7L236.0 121.4" stroke="rgba(30,5,15,.5)" stroke-width="25.5"/>
<path d="M238.3 107.7L236.0 121.4" stroke="#408d49" stroke-width="22"/>
<path d="M237.9 107.2L235.6 121.0" stroke="#57a460" stroke-width="18.5"/>
<path d="M237.5 106.8L235.2 120.5" stroke="#6ab672" stroke-width="14.5"/>
<path d="M237.2 106.3L234.9 120.1" stroke="#74c07c" stroke-width="10"/>
<path d="M276.1 43.5L286.4 68.7" stroke="rgba(30,5,15,.5)" stroke-width="25.5"/>
<path d="M276.1 43.5L286.4 68.7" stroke="#c23447" stroke-width="22"/>
<path d="M275.7 43.1L286.0 68.3" stroke="#d85262" stroke-width="18.5"/>
<path d="M275.3 42.6L285.6 67.8" stroke="#ea6978" stroke-width="14.5"/>
<path d="M275.0 42.2L285.3 67.4" stroke="#f47684" stroke-width="10"/>
<path d="M307.0 68.7L293.2 84.8" stroke="rgba(30,5,15,.5)" stroke-width="25.5"/>
<path d="M307.0 68.7L293.2 84.8" stroke="#3280bb" stroke-width="22"/>
<path d="M306.6 68.3L292.9 84.3" stroke="#4897d1" stroke-width="18.5"/>
<path d="M306.3 67.8L292.5 83.9" stroke="#58aae2" stroke-width="14.5"/>
<path d="M305.9 67.4L292.2 83.4" stroke="#62b4ec" stroke-width="10"/>
<path d="M327.6 6.9L343.6 4.6" stroke="rgba(30,5,15,.5)" stroke-width="25.5"/>
<path d="M327.6 6.9L343.6 4.6" stroke="#c23447" stroke-width="22"/>
<path d="M327.2 6.4L343.3 4.1" stroke="#d85262" stroke-width="18.5"/>
<path d="M326.9 6.0L342.9 3.7" stroke="#ea6978" stroke-width="14.5"/>
<path d="M326.5 5.5L342.6 3.2" stroke="#f47684" stroke-width="10"/>
<path d="M348.2 20.6L368.8 4.6" stroke="rgba(30,5,15,.5)" stroke-width="25.5"/>
<path d="M348.2 20.6L368.8 4.6" stroke="#cf6b29" stroke-width="22"/>
<path d="M347.9 20.2L368.5 4.1" stroke="#e1813c" stroke-width="18.5"/>
<path d="M347.5 19.7L368.1 3.7" stroke="#f0924b" stroke-width="14.5"/>
<path d="M347.1 19.3L367.8 3.2" stroke="#f89c54" stroke-width="10"/>
<path d="M362.0 32.1L339.1 50.4" stroke="rgba(30,5,15,.5)" stroke-width="25.5"/>
<path d="M362.0 32.1L339.1 50.4" stroke="#c23447" stroke-width="22"/>
<path d="M361.6 31.6L338.7 50.0" stroke="#d85262" stroke-width="18.5"/>
<path d="M361.2 31.2L338.3 49.5" stroke="#ea6978" stroke-width="14.5"/>
<path d="M360.9 30.7L338.0 49.1" stroke="#f47684" stroke-width="10"/>
<path d="M403.2 55.0L398.6 91.6" stroke="rgba(30,5,15,.5)" stroke-width="25.5"/>
<path d="M403.2 55.0L398.6 91.6" stroke="#408d49" stroke-width="22"/>
<path d="M402.8 54.5L398.3 91.2" stroke="#57a460" stroke-width="18.5"/>
<path d="M402.5 54.1L397.9 90.7" stroke="#6ab672" stroke-width="14.5"/>
<path d="M402.1 53.6L397.5 90.3" stroke="#74c07c" stroke-width="10"/>
<path d="M400.9 6.9L435.3 3.4" stroke="rgba(30,5,15,.5)" stroke-width="25.5"/>
<path d="M400.9 6.9L435.3 3.4" stroke="#c23447" stroke-width="22"/>
<path d="M400.6 6.4L434.9 3.0" stroke="#d85262" stroke-width="18.5"/>
<path d="M400.2 6.0L434.6 2.5" stroke="#ea6978" stroke-width="14.5"/>
<path d="M399.8 5.5L434.2 2.1" stroke="#f47684" stroke-width="10"/>
<path d="M481.1 16.0L504.0 18.3" stroke="rgba(30,5,15,.5)" stroke-width="25.5"/>
<path d="M481.1 16.0L504.0 18.3" stroke="#cdaa21" stroke-width="22"/>
<path d="M480.7 15.6L503.6 17.9" stroke="#e0c033" stroke-width="18.5"/>
<path d="M480.4 15.1L503.3 17.4" stroke="#efd242" stroke-width="14.5"/>
<path d="M480.0 14.7L502.9 17.0" stroke="#f8dc4a" stroke-width="10"/>
<path d="M465.1 29.8L481.1 36.7" stroke="rgba(30,5,15,.5)" stroke-width="25.5"/>
<path d="M465.1 29.8L481.1 36.7" stroke="#cdaa21" stroke-width="22"/>
<path d="M464.7 29.3L480.7 36.2" stroke="#e0c033" stroke-width="18.5"/>
<path d="M464.3 28.9L480.4 35.8" stroke="#efd242" stroke-width="14.5"/>
<path d="M464.0 28.4L480.0 35.3" stroke="#f8dc4a" stroke-width="10"/>
<path d="M455.9 38.9L457.0 40.1" stroke="rgba(30,5,15,.5)" stroke-width="25.5"/>
<path d="M455.9 38.9L457.0 40.1" stroke="#cf6b29" stroke-width="22"/>
<path d="M455.5 38.5L456.7 39.6" stroke="#e1813c" stroke-width="18.5"/>
<path d="M455.2 38.0L456.3 39.2" stroke="#f0924b" stroke-width="14.5"/>
<path d="M454.8 37.6L456.0 38.7" stroke="#f89c54" stroke-width="10"/>
<path d="M494.8 36.7L490.3 43.5" stroke="rgba(30,5,15,.5)" stroke-width="25.5"/>
<path d="M494.8 36.7L490.3 43.5" stroke="#cf6b29" stroke-width="22"/>
<path d="M494.5 36.2L489.9 43.1" stroke="#e1813c" stroke-width="18.5"/>
<path d="M494.1 35.8L489.5 42.6" stroke="#f0924b" stroke-width="14.5"/>
<path d="M493.8 35.3L489.2 42.2" stroke="#f89c54" stroke-width="10"/>
<path d="M442.1 57.3L469.6 55.0" stroke="rgba(30,5,15,.5)" stroke-width="25.5"/>
<path d="M442.1 57.3L469.6 55.0" stroke="#c23447" stroke-width="22"/>
<path d="M441.8 56.8L469.3 54.5" stroke="#d85262" stroke-width="18.5"/>
<path d="M441.4 56.4L468.9 54.1" stroke="#ea6978" stroke-width="14.5"/>
<path d="M441.1 55.9L468.6 53.6" stroke="#f47684" stroke-width="10"/>
<path d="M502.9 68.7L502.9 96.2" stroke="rgba(30,5,15,.5)" stroke-width="25.5"/>
<path d="M502.9 68.7L502.9 96.2" stroke="#cf6b29" stroke-width="22"/>
<path d="M502.5 68.3L502.5 95.8" stroke="#e1813c" stroke-width="18.5"/>
<path d="M502.1 67.8L502.1 95.3" stroke="#f0924b" stroke-width="14.5"/>
<path d="M501.8 67.4L501.8 94.9" stroke="#f89c54" stroke-width="10"/>
<path d="M502.9 114.5L502.9 142.0" stroke="rgba(30,5,15,.5)" stroke-width="25.5"/>
<path d="M502.9 114.5L502.9 142.0" stroke="#c23447" stroke-width="22"/>
<path d="M502.5 114.1L502.5 141.6" stroke="#d85262" stroke-width="18.5"/>
<path d="M502.1 113.6L502.1 141.1" stroke="#ea6978" stroke-width="14.5"/>
<path d="M501.8 113.2L501.8 140.7" stroke="#f47684" stroke-width="10"/>
<path d="M501.7 158.1L501.7 160.4" stroke="rgba(30,5,15,.5)" stroke-width="25.5"/>
<path d="M501.7 158.1L501.7 160.4" stroke="#3280bb" stroke-width="22"/>
<path d="M501.4 157.6L501.4 159.9" stroke="#4897d1" stroke-width="18.5"/>
<path d="M501.0 157.2L501.0 159.5" stroke="#58aae2" stroke-width="14.5"/>
<path d="M500.6 156.7L500.6 159.0" stroke="#62b4ec" stroke-width="10"/>
<path d="M428.4 89.3L471.9 73.3" stroke="rgba(30,5,15,.5)" stroke-width="25.5"/>
<path d="M428.4 89.3L471.9 73.3" stroke="#ae3043" stroke-width="22"/>
<path d="M428.0 88.9L471.6 72.9" stroke="#c44457" stroke-width="18.5"/>
<path d="M427.7 88.4L471.2 72.4" stroke="#d45367" stroke-width="14.5"/>
<path d="M427.3 88.0L470.9 72.0" stroke="#de5c70" stroke-width="10"/>
<path d="M444.4 100.8L467.3 91.6" stroke="rgba(30,5,15,.5)" stroke-width="25.5"/>
<path d="M444.4 100.8L467.3 91.6" stroke="#c23447" stroke-width="22"/>
<path d="M444.1 100.4L467.0 91.2" stroke="#d85262" stroke-width="18.5"/>
<path d="M443.7 99.9L466.6 90.7" stroke="#ea6978" stroke-width="14.5"/>
<path d="M443.4 99.5L466.3 90.3" stroke="#f47684" stroke-width="10"/>
<path d="M364.3 87.1L348.2 103.1" stroke="rgba(30,5,15,.5)" stroke-width="25.5"/>
<path d="M364.3 87.1L348.2 103.1" stroke="#cf6b29" stroke-width="22"/>
<path d="M363.9 86.6L347.9 102.6" stroke="#e1813c" stroke-width="18.5"/>
<path d="M363.5 86.2L347.5 102.2" stroke="#f0924b" stroke-width="14.5"/>
<path d="M363.2 85.7L347.1 101.7" stroke="#f89c54" stroke-width="10"/>
<path d="M359.7 73.3L368.8 71.0" stroke="rgba(30,5,15,.5)" stroke-width="25.5"/>
<path d="M359.7 73.3L368.8 71.0" stroke="#c23447" stroke-width="22"/>
<path d="M359.3 72.9L368.5 70.6" stroke="#d85262" stroke-width="18.5"/>
<path d="M359.0 72.4L368.1 70.1" stroke="#ea6978" stroke-width="14.5"/>
<path d="M358.6 72.0L367.8 69.7" stroke="#f47684" stroke-width="10"/>
<path d="M336.8 128.3L332.2 137.5" stroke="rgba(30,5,15,.5)" stroke-width="25.5"/>
<path d="M336.8 128.3L332.2 137.5" stroke="#c23447" stroke-width="22"/>
<path d="M336.4 127.8L331.8 137.0" stroke="#d85262" stroke-width="18.5"/>
<path d="M336.0 127.4L331.5 136.6" stroke="#ea6978" stroke-width="14.5"/>
<path d="M335.7 126.9L331.1 136.1" stroke="#f47684" stroke-width="10"/>
<path d="M366.5 112.3L352.8 128.3" stroke="rgba(30,5,15,.5)" stroke-width="25.5"/>
<path d="M366.5 112.3L352.8 128.3" stroke="#cdaa21" stroke-width="22"/>
<path d="M366.2 111.8L352.4 127.8" stroke="#e0c033" stroke-width="18.5"/>
<path d="M365.8 111.4L352.1 127.4" stroke="#efd242" stroke-width="14.5"/>
<path d="M365.5 110.9L351.7 126.9" stroke="#f8dc4a" stroke-width="10"/>
<path d="M414.7 103.1L435.3 130.6L462.8 176.4" stroke="rgba(30,5,15,.5)" stroke-width="25.5"/>
<path d="M414.7 103.1L435.3 130.6" stroke="#cdaa21" stroke-width="22"/>
<path d="M414.3 102.6L434.9 130.1" stroke="#e0c033" stroke-width="18.5"/>
<path d="M413.9 102.2L434.6 129.7" stroke="#efd242" stroke-width="14.5"/>
<path d="M413.6 101.7L434.2 129.2" stroke="#f8dc4a" stroke-width="10"/>
<path d="M435.3 130.6L462.8 176.4" stroke="#408d49" stroke-width="22"/>
<path d="M434.9 130.1L462.4 176.0" stroke="#57a460" stroke-width="18.5"/>
<path d="M434.6 129.7L462.0 175.5" stroke="#6ab672" stroke-width="14.5"/>
<path d="M434.2 129.2L461.7 175.1" stroke="#74c07c" stroke-width="10"/>
<path d="M343.6 164.9L332.2 181.0L325.3 197.0" stroke="rgba(30,5,15,.5)" stroke-width="25.5"/>
<path d="M343.6 164.9L332.2 181.0" stroke="#cdaa21" stroke-width="22"/>
<path d="M343.3 164.5L331.8 180.5" stroke="#e0c033" stroke-width="18.5"/>
<path d="M342.9 164.0L331.5 180.1" stroke="#efd242" stroke-width="14.5"/>
<path d="M342.6 163.6L331.1 179.6" stroke="#f8dc4a" stroke-width="10"/>
<path d="M332.2 181.0L325.3 197.0" stroke="#408d49" stroke-width="22"/>
<path d="M331.8 180.5L325.0 196.6" stroke="#57a460" stroke-width="18.5"/>
<path d="M331.5 180.1L324.6 196.1" stroke="#6ab672" stroke-width="14.5"/>
<path d="M331.1 179.6L324.2 195.7" stroke="#74c07c" stroke-width="10"/>
<path d="M265.7 126.0L256.6 137.5" stroke="rgba(30,5,15,.5)" stroke-width="25.5"/>
<path d="M265.7 126.0L256.6 137.5" stroke="#c23447" stroke-width="22"/>
<path d="M265.4 125.6L256.2 137.0" stroke="#d85262" stroke-width="18.5"/>
<path d="M265.0 125.1L255.9 136.6" stroke="#ea6978" stroke-width="14.5"/>
<path d="M264.7 124.7L255.5 136.1" stroke="#f47684" stroke-width="10"/>
<path d="M309.3 181.0L297.8 197.0" stroke="rgba(30,5,15,.5)" stroke-width="25.5"/>
<path d="M309.3 181.0L297.8 197.0" stroke="#3280bb" stroke-width="22"/>
<path d="M308.9 180.5L297.5 196.6" stroke="#4897d1" stroke-width="18.5"/>
<path d="M308.6 180.1L297.1 196.1" stroke="#58aae2" stroke-width="14.5"/>
<path d="M308.2 179.6L296.7 195.7" stroke="#62b4ec" stroke-width="10"/>
<path d="M426.1 151.2L421.5 158.1" stroke="rgba(30,5,15,.5)" stroke-width="25.5"/>
<path d="M426.1 151.2L421.5 158.1" stroke="#408d49" stroke-width="22"/>
<path d="M425.8 150.8L421.2 157.6" stroke="#57a460" stroke-width="18.5"/>
<path d="M425.4 150.3L420.8 157.2" stroke="#6ab672" stroke-width="14.5"/>
<path d="M425.0 149.9L420.5 156.7" stroke="#74c07c" stroke-width="10"/>
<path d="M4.6 208.7L13.7 233.9L27.5 250.0L38.9 270.6" stroke="rgba(30,5,15,.5)" stroke-width="25.5"/>
<path d="M4.6 208.7L13.7 233.9" stroke="#c23447" stroke-width="22"/>
<path d="M4.2 208.3L13.4 233.5" stroke="#d85262" stroke-width="18.5"/>
<path d="M3.9 207.8L13.0 233.0" stroke="#ea6978" stroke-width="14.5"/>
<path d="M3.5 207.4L12.7 232.6" stroke="#f47684" stroke-width="10"/>
<path d="M13.7 233.9L27.5 250.0" stroke="#c23447" stroke-width="22"/>
<path d="M13.4 233.5L27.1 249.5" stroke="#d85262" stroke-width="18.5"/>
<path d="M13.0 233.0L26.8 249.1" stroke="#ea6978" stroke-width="14.5"/>
<path d="M12.7 232.6L26.4 248.6" stroke="#f47684" stroke-width="10"/>
<path d="M27.5 250.0L38.9 270.6" stroke="#3280bb" stroke-width="22"/>
<path d="M27.1 249.5L38.6 270.2" stroke="#4897d1" stroke-width="18.5"/>
<path d="M26.8 249.1L38.2 269.7" stroke="#58aae2" stroke-width="14.5"/>
<path d="M26.4 248.6L37.9 269.3" stroke="#62b4ec" stroke-width="10"/>
<path d="M61.9 201.9L38.9 222.5" stroke="rgba(30,5,15,.5)" stroke-width="25.5"/>
<path d="M61.9 201.9L38.9 222.5" stroke="#cdaa21" stroke-width="22"/>
<path d="M61.5 201.4L38.6 222.0" stroke="#e0c033" stroke-width="18.5"/>
<path d="M61.1 201.0L38.2 221.6" stroke="#efd242" stroke-width="14.5"/>
<path d="M60.8 200.5L37.9 221.1" stroke="#f8dc4a" stroke-width="10"/>
<path d="M75.6 201.9L71.0 227.1L64.1 250.0" stroke="rgba(30,5,15,.5)" stroke-width="25.5"/>
<path d="M75.6 201.9L71.0 227.1" stroke="#c23447" stroke-width="22"/>
<path d="M75.2 201.4L70.7 226.6" stroke="#d85262" stroke-width="18.5"/>
<path d="M74.9 201.0L70.3 226.2" stroke="#ea6978" stroke-width="14.5"/>
<path d="M74.5 200.5L69.9 225.7" stroke="#f47684" stroke-width="10"/>
<path d="M71.0 227.1L64.1 250.0" stroke="#cf6b29" stroke-width="22"/>
<path d="M70.7 226.6L63.8 249.5" stroke="#e1813c" stroke-width="18.5"/>
<path d="M70.3 226.2L63.4 249.1" stroke="#f0924b" stroke-width="14.5"/>
<path d="M69.9 225.7L63.1 248.6" stroke="#f89c54" stroke-width="10"/>
<path d="M91.6 204.2L114.5 229.4" stroke="rgba(30,5,15,.5)" stroke-width="25.5"/>
<path d="M91.6 204.2L114.5 229.4" stroke="#3280bb" stroke-width="22"/>
<path d="M91.3 203.7L114.2 228.9" stroke="#4897d1" stroke-width="18.5"/>
<path d="M90.9 203.3L113.8 228.5" stroke="#58aae2" stroke-width="14.5"/>
<path d="M90.6 202.8L113.5 228.0" stroke="#62b4ec" stroke-width="10"/>
<path d="M240.5 201.9L241.7 203.0" stroke="rgba(30,5,15,.5)" stroke-width="25.5"/>
<path d="M240.5 201.9L241.7 203.0" stroke="#408d49" stroke-width="22"/>
<path d="M240.2 201.4L241.3 202.6" stroke="#57a460" stroke-width="18.5"/>
<path d="M239.8 201.0L241.0 202.1" stroke="#6ab672" stroke-width="14.5"/>
<path d="M239.5 200.5L240.6 201.7" stroke="#74c07c" stroke-width="10"/>
<path d="M146.6 233.9L155.8 247.7L164.9 254.6" stroke="rgba(30,5,15,.5)" stroke-width="25.5"/>
<path d="M146.6 233.9L155.8 247.7" stroke="#408d49" stroke-width="22"/>
<path d="M146.3 233.5L155.4 247.2" stroke="#57a460" stroke-width="18.5"/>
<path d="M145.9 233.0L155.1 246.8" stroke="#6ab672" stroke-width="14.5"/>
<path d="M145.5 232.6L154.7 246.3" stroke="#74c07c" stroke-width="10"/>
<path d="M155.8 247.7L164.9 254.6" stroke="#cdaa21" stroke-width="22"/>
<path d="M155.4 247.2L164.6 254.1" stroke="#e0c033" stroke-width="18.5"/>
<path d="M155.1 246.8L164.2 253.7" stroke="#efd242" stroke-width="14.5"/>
<path d="M154.7 246.3L163.9 253.2" stroke="#f8dc4a" stroke-width="10"/>
<path d="M155.8 263.7L158.1 286.6" stroke="rgba(30,5,15,.5)" stroke-width="25.5"/>
<path d="M155.8 263.7L158.1 286.6" stroke="#c23447" stroke-width="22"/>
<path d="M155.4 263.3L157.7 286.2" stroke="#d85262" stroke-width="18.5"/>
<path d="M155.1 262.8L157.4 285.7" stroke="#ea6978" stroke-width="14.5"/>
<path d="M154.7 262.4L157.0 285.3" stroke="#f47684" stroke-width="10"/>
<path d="M194.7 272.9L195.9 274.0" stroke="rgba(30,5,15,.5)" stroke-width="25.5"/>
<path d="M194.7 272.9L195.9 274.0" stroke="#cdaa21" stroke-width="22"/>
<path d="M194.4 272.4L195.5 273.6" stroke="#e0c033" stroke-width="18.5"/>
<path d="M194.0 272.0L195.2 273.1" stroke="#efd242" stroke-width="14.5"/>
<path d="M193.7 271.5L194.8 272.7" stroke="#f8dc4a" stroke-width="10"/>
<path d="M201.6 252.3L210.8 268.3" stroke="rgba(30,5,15,.5)" stroke-width="25.5"/>
<path d="M201.6 252.3L210.8 268.3" stroke="#3280bb" stroke-width="22"/>
<path d="M201.2 251.8L210.4 267.9" stroke="#4897d1" stroke-width="18.5"/>
<path d="M200.9 251.4L210.0 267.4" stroke="#58aae2" stroke-width="14.5"/>
<path d="M200.5 250.9L209.7 267.0" stroke="#62b4ec" stroke-width="10"/>
<path d="M245.1 252.3L246.3 253.4" stroke="rgba(30,5,15,.5)" stroke-width="25.5"/>
<path d="M245.1 252.3L246.3 253.4" stroke="#3280bb" stroke-width="22"/>
<path d="M244.8 251.8L245.9 253.0" stroke="#4897d1" stroke-width="18.5"/>
<path d="M244.4 251.4L245.6 252.5" stroke="#58aae2" stroke-width="14.5"/>
<path d="M244.1 250.9L245.2 252.1" stroke="#62b4ec" stroke-width="10"/>
<path d="M249.7 318.7L245.1 327.9" stroke="rgba(30,5,15,.5)" stroke-width="25.5"/>
<path d="M249.7 318.7L245.1 327.9" stroke="#cf6b29" stroke-width="22"/>
<path d="M249.4 318.3L244.8 327.4" stroke="#e1813c" stroke-width="18.5"/>
<path d="M249.0 317.8L244.4 327.0" stroke="#f0924b" stroke-width="14.5"/>
<path d="M248.6 317.4L244.1 326.5" stroke="#f89c54" stroke-width="10"/>
<path d="M201.6 309.5L183.3 325.6L151.2 359.9" stroke="rgba(30,5,15,.5)" stroke-width="25.5"/>
<path d="M201.6 309.5L183.3 325.6" stroke="#cdaa21" stroke-width="22"/>
<path d="M201.2 309.1L182.9 325.1" stroke="#e0c033" stroke-width="18.5"/>
<path d="M200.9 308.6L182.6 324.7" stroke="#efd242" stroke-width="14.5"/>
<path d="M200.5 308.2L182.2 324.2" stroke="#f8dc4a" stroke-width="10"/>
<path d="M183.3 325.6L151.2 359.9" stroke="#408d49" stroke-width="22"/>
<path d="M182.9 325.1L150.8 359.5" stroke="#57a460" stroke-width="18.5"/>
<path d="M182.6 324.7L150.5 359.0" stroke="#6ab672" stroke-width="14.5"/>
<path d="M182.2 324.2L150.1 358.6" stroke="#74c07c" stroke-width="10"/>
<path d="M9.2 254.6L9.2 295.8L6.9 309.5L6.9 332.5" stroke="rgba(30,5,15,.5)" stroke-width="25.5"/>
<path d="M9.2 254.6L9.2 295.8" stroke="#3280bb" stroke-width="22"/>
<path d="M8.8 254.1L8.8 295.4" stroke="#4897d1" stroke-width="18.5"/>
<path d="M8.4 253.7L8.4 294.9" stroke="#58aae2" stroke-width="14.5"/>
<path d="M8.1 253.2L8.1 294.5" stroke="#62b4ec" stroke-width="10"/>
<path d="M9.2 295.8L6.9 309.5" stroke="#3280bb" stroke-width="22"/>
<path d="M8.8 295.4L6.5 309.1" stroke="#4897d1" stroke-width="18.5"/>
<path d="M8.4 294.9L6.2 308.6" stroke="#58aae2" stroke-width="14.5"/>
<path d="M8.1 294.5L5.8 308.2" stroke="#62b4ec" stroke-width="10"/>
<path d="M6.9 309.5L6.9 332.5" stroke="#c23447" stroke-width="22"/>
<path d="M6.5 309.1L6.5 332.0" stroke="#d85262" stroke-width="18.5"/>
<path d="M6.2 308.6L6.2 331.6" stroke="#ea6978" stroke-width="14.5"/>
<path d="M5.8 308.2L5.8 331.1" stroke="#f47684" stroke-width="10"/>
<path d="M52.7 263.7L80.2 266.0" stroke="rgba(30,5,15,.5)" stroke-width="25.5"/>
<path d="M52.7 263.7L80.2 266.0" stroke="#3280bb" stroke-width="22"/>
<path d="M52.3 263.3L79.8 265.6" stroke="#4897d1" stroke-width="18.5"/>
<path d="M52.0 262.8L79.5 265.1" stroke="#58aae2" stroke-width="14.5"/>
<path d="M51.6 262.4L79.1 264.7" stroke="#62b4ec" stroke-width="10"/>
<path d="M22.9 302.7L25.2 316.4" stroke="rgba(30,5,15,.5)" stroke-width="25.5"/>
<path d="M22.9 302.7L25.2 316.4" stroke="#cdaa21" stroke-width="22"/>
<path d="M22.5 302.2L24.8 316.0" stroke="#e0c033" stroke-width="18.5"/>
<path d="M22.2 301.8L24.5 315.5" stroke="#efd242" stroke-width="14.5"/>
<path d="M21.8 301.3L24.1 315.1" stroke="#f8dc4a" stroke-width="10"/>
<path d="M87.1 305.0L96.2 309.5" stroke="rgba(30,5,15,.5)" stroke-width="25.5"/>
<path d="M87.1 305.0L96.2 309.5" stroke="#3280bb" stroke-width="22"/>
<path d="M86.7 304.5L95.9 309.1" stroke="#4897d1" stroke-width="18.5"/>
<path d="M86.3 304.1L95.5 308.6" stroke="#58aae2" stroke-width="14.5"/>
<path d="M86.0 303.6L95.1 308.2" stroke="#62b4ec" stroke-width="10"/>
<path d="M91.6 346.2L89.3 364.5L84.8 392.0" stroke="rgba(30,5,15,.5)" stroke-width="25.5"/>
<path d="M91.6 346.2L89.3 364.5" stroke="#408d49" stroke-width="22"/>
<path d="M91.3 345.8L89.0 364.1" stroke="#57a460" stroke-width="18.5"/>
<path d="M90.9 345.3L88.6 363.6" stroke="#6ab672" stroke-width="14.5"/>
<path d="M90.6 344.9L88.3 363.2" stroke="#74c07c" stroke-width="10"/>
<path d="M89.3 364.5L84.8 392.0" stroke="#cdaa21" stroke-width="22"/>
<path d="M89.0 364.1L84.4 391.6" stroke="#e0c033" stroke-width="18.5"/>
<path d="M88.6 363.6L84.0 391.1" stroke="#efd242" stroke-width="14.5"/>
<path d="M88.3 363.2L83.7 390.7" stroke="#f8dc4a" stroke-width="10"/>
<path d="M4.6 378.3L4.6 392.0" stroke="rgba(30,5,15,.5)" stroke-width="25.5"/>
<path d="M4.6 378.3L4.6 392.0" stroke="#3280bb" stroke-width="22"/>
<path d="M4.2 377.8L4.2 391.6" stroke="#4897d1" stroke-width="18.5"/>
<path d="M3.9 377.4L3.9 391.1" stroke="#58aae2" stroke-width="14.5"/>
<path d="M3.5 376.9L3.5 390.7" stroke="#62b4ec" stroke-width="10"/>
<path d="M146.6 373.7L132.9 392.0" stroke="rgba(30,5,15,.5)" stroke-width="25.5"/>
<path d="M146.6 373.7L132.9 392.0" stroke="#c23447" stroke-width="22"/>
<path d="M146.3 373.2L132.5 391.6" stroke="#d85262" stroke-width="18.5"/>
<path d="M145.9 372.8L132.2 391.1" stroke="#ea6978" stroke-width="14.5"/>
<path d="M145.5 372.3L131.8 390.7" stroke="#f47684" stroke-width="10"/>
<path d="M245.1 339.3L246.3 340.5" stroke="rgba(30,5,15,.5)" stroke-width="25.5"/>
<path d="M245.1 339.3L246.3 340.5" stroke="#c23447" stroke-width="22"/>
<path d="M244.8 338.9L245.9 340.0" stroke="#d85262" stroke-width="18.5"/>
<path d="M244.4 338.4L245.6 339.6" stroke="#ea6978" stroke-width="14.5"/>
<path d="M244.1 338.0L245.2 339.1" stroke="#f47684" stroke-width="10"/>
<path d="M206.2 364.5L207.3 365.7" stroke="rgba(30,5,15,.5)" stroke-width="25.5"/>
<path d="M206.2 364.5L207.3 365.7" stroke="#cdaa21" stroke-width="22"/>
<path d="M205.8 364.1L207.0 365.2" stroke="#e0c033" stroke-width="18.5"/>
<path d="M205.5 363.6L206.6 364.8" stroke="#efd242" stroke-width="14.5"/>
<path d="M205.1 363.2L206.3 364.3" stroke="#f8dc4a" stroke-width="10"/>
<path d="M293.2 204.2L294.4 205.3" stroke="rgba(30,5,15,.5)" stroke-width="25.5"/>
<path d="M293.2 204.2L294.4 205.3" stroke="#3280bb" stroke-width="22"/>
<path d="M292.9 203.7L294.0 204.9" stroke="#4897d1" stroke-width="18.5"/>
<path d="M292.5 203.3L293.7 204.4" stroke="#58aae2" stroke-width="14.5"/>
<path d="M292.2 202.8L293.3 204.0" stroke="#62b4ec" stroke-width="10"/>
<path d="M320.7 201.9L318.4 208.7" stroke="rgba(30,5,15,.5)" stroke-width="25.5"/>
<path d="M320.7 201.9L318.4 208.7" stroke="#408d49" stroke-width="22"/>
<path d="M320.4 201.4L318.1 208.3" stroke="#57a460" stroke-width="18.5"/>
<path d="M320.0 201.0L317.7 207.8" stroke="#6ab672" stroke-width="14.5"/>
<path d="M319.6 200.5L317.4 207.4" stroke="#74c07c" stroke-width="10"/>
<path d="M252.0 224.8L258.9 221.3L281.8 220.2" stroke="rgba(30,5,15,.5)" stroke-width="25.5"/>
<path d="M252.0 224.8L258.9 221.3" stroke="#c23447" stroke-width="22"/>
<path d="M251.6 224.3L258.5 220.9" stroke="#d85262" stroke-width="18.5"/>
<path d="M251.3 223.9L258.2 220.4" stroke="#ea6978" stroke-width="14.5"/>
<path d="M250.9 223.4L257.8 220.0" stroke="#f47684" stroke-width="10"/>
<path d="M258.9 221.3L281.8 220.2" stroke="#cf6b29" stroke-width="22"/>
<path d="M258.5 220.9L281.4 219.8" stroke="#e1813c" stroke-width="18.5"/>
<path d="M258.2 220.4L281.1 219.3" stroke="#f0924b" stroke-width="14.5"/>
<path d="M257.8 220.0L280.7 218.9" stroke="#f89c54" stroke-width="10"/>
<path d="M256.6 266.0L257.7 267.2" stroke="rgba(30,5,15,.5)" stroke-width="25.5"/>
<path d="M256.6 266.0L257.7 267.2" stroke="#c23447" stroke-width="22"/>
<path d="M256.2 265.6L257.4 266.7" stroke="#d85262" stroke-width="18.5"/>
<path d="M255.9 265.1L257.0 266.3" stroke="#ea6978" stroke-width="14.5"/>
<path d="M255.5 264.7L256.6 265.8" stroke="#f47684" stroke-width="10"/>
<path d="M318.4 279.8L343.6 291.2" stroke="rgba(30,5,15,.5)" stroke-width="25.5"/>
<path d="M318.4 279.8L343.6 291.2" stroke="#992837" stroke-width="22"/>
<path d="M318.1 279.3L343.3 290.8" stroke="#ad3747" stroke-width="18.5"/>
<path d="M317.7 278.9L342.9 290.3" stroke="#bd4353" stroke-width="14.5"/>
<path d="M317.4 278.4L342.6 289.9" stroke="#c64a5a" stroke-width="10"/>
<path d="M414.7 217.9L391.7 240.8" stroke="rgba(30,5,15,.5)" stroke-width="25.5"/>
<path d="M414.7 217.9L391.7 240.8" stroke="#408d49" stroke-width="22"/>
<path d="M414.3 217.5L391.4 240.4" stroke="#57a460" stroke-width="18.5"/>
<path d="M413.9 217.0L391.0 239.9" stroke="#6ab672" stroke-width="14.5"/>
<path d="M413.6 216.6L390.7 239.5" stroke="#74c07c" stroke-width="10"/>
<path d="M435.3 220.2L430.7 233.9L412.4 252.3" stroke="rgba(30,5,15,.5)" stroke-width="25.5"/>
<path d="M435.3 220.2L430.7 233.9" stroke="#c23447" stroke-width="22"/>
<path d="M434.9 219.8L430.3 233.5" stroke="#d85262" stroke-width="18.5"/>
<path d="M434.6 219.3L430.0 233.0" stroke="#ea6978" stroke-width="14.5"/>
<path d="M434.2 218.9L429.6 232.6" stroke="#f47684" stroke-width="10"/>
<path d="M430.7 233.9L412.4 252.3" stroke="#cf6b29" stroke-width="22"/>
<path d="M430.3 233.5L412.0 251.8" stroke="#e1813c" stroke-width="18.5"/>
<path d="M430.0 233.0L411.6 251.4" stroke="#f0924b" stroke-width="14.5"/>
<path d="M429.6 232.6L411.3 250.9" stroke="#f89c54" stroke-width="10"/>
<path d="M380.3 286.6L387.2 293.5" stroke="rgba(30,5,15,.5)" stroke-width="25.5"/>
<path d="M380.3 286.6L387.2 293.5" stroke="#3280bb" stroke-width="22"/>
<path d="M379.9 286.2L386.8 293.1" stroke="#4897d1" stroke-width="18.5"/>
<path d="M379.6 285.7L386.4 292.6" stroke="#58aae2" stroke-width="14.5"/>
<path d="M379.2 285.3L386.1 292.2" stroke="#62b4ec" stroke-width="10"/>
<path d="M467.3 309.5L468.5 310.7" stroke="rgba(30,5,15,.5)" stroke-width="25.5"/>
<path d="M467.3 309.5L468.5 310.7" stroke="#c23447" stroke-width="22"/>
<path d="M467.0 309.1L468.1 310.2" stroke="#d85262" stroke-width="18.5"/>
<path d="M466.6 308.6L467.8 309.8" stroke="#ea6978" stroke-width="14.5"/>
<path d="M466.3 308.2L467.4 309.3" stroke="#f47684" stroke-width="10"/>
<path d="M297.8 309.5L339.1 307.3" stroke="rgba(30,5,15,.5)" stroke-width="25.5"/>
<path d="M297.8 309.5L339.1 307.3" stroke="#c23447" stroke-width="22"/>
<path d="M297.5 309.1L338.7 306.8" stroke="#d85262" stroke-width="18.5"/>
<path d="M297.1 308.6L338.3 306.4" stroke="#ea6978" stroke-width="14.5"/>
<path d="M296.7 308.2L338.0 305.9" stroke="#f47684" stroke-width="10"/>
<path d="M270.3 369.1L256.6 385.1" stroke="rgba(30,5,15,.5)" stroke-width="25.5"/>
<path d="M270.3 369.1L256.6 385.1" stroke="#3280bb" stroke-width="22"/>
<path d="M270.0 368.7L256.2 384.7" stroke="#4897d1" stroke-width="18.5"/>
<path d="M269.6 368.2L255.9 384.2" stroke="#58aae2" stroke-width="14.5"/>
<path d="M269.2 367.8L255.5 383.8" stroke="#62b4ec" stroke-width="10"/>
<path d="M300.1 373.7L297.8 392.0" stroke="rgba(30,5,15,.5)" stroke-width="25.5"/>
<path d="M300.1 373.7L297.8 392.0" stroke="#cdaa21" stroke-width="22"/>
<path d="M299.7 373.2L297.5 391.6" stroke="#e0c033" stroke-width="18.5"/>
<path d="M299.4 372.8L297.1 391.1" stroke="#efd242" stroke-width="14.5"/>
<path d="M299.0 372.3L296.7 390.7" stroke="#f8dc4a" stroke-width="10"/>
<path d="M341.3 373.7L348.2 382.9" stroke="rgba(30,5,15,.5)" stroke-width="25.5"/>
<path d="M341.3 373.7L348.2 382.9" stroke="#408d49" stroke-width="22"/>
<path d="M341.0 373.2L347.9 382.4" stroke="#57a460" stroke-width="18.5"/>
<path d="M340.6 372.8L347.5 382.0" stroke="#6ab672" stroke-width="14.5"/>
<path d="M340.3 372.3L347.1 381.5" stroke="#74c07c" stroke-width="10"/>
<path d="M359.7 348.5L378.0 359.9" stroke="rgba(30,5,15,.5)" stroke-width="25.5"/>
<path d="M359.7 348.5L378.0 359.9" stroke="#3280bb" stroke-width="22"/>
<path d="M359.3 348.0L377.6 359.5" stroke="#4897d1" stroke-width="18.5"/>
<path d="M359.0 347.6L377.3 359.0" stroke="#58aae2" stroke-width="14.5"/>
<path d="M358.6 347.1L376.9 358.6" stroke="#62b4ec" stroke-width="10"/>
<path d="M467.3 364.5L460.5 373.7" stroke="rgba(30,5,15,.5)" stroke-width="25.5"/>
<path d="M467.3 364.5L460.5 373.7" stroke="#c23447" stroke-width="22"/>
<path d="M467.0 364.1L460.1 373.2" stroke="#d85262" stroke-width="18.5"/>
<path d="M466.6 363.6L459.8 372.8" stroke="#ea6978" stroke-width="14.5"/>
<path d="M466.3 363.2L459.4 372.3" stroke="#f47684" stroke-width="10"/>
<path d="M499.4 350.8L500.6 351.9" stroke="rgba(30,5,15,.5)" stroke-width="25.5"/>
<path d="M499.4 350.8L500.6 351.9" stroke="#408d49" stroke-width="22"/>
<path d="M499.1 350.3L500.2 351.5" stroke="#57a460" stroke-width="18.5"/>
<path d="M498.7 349.9L499.8 351.0" stroke="#6ab672" stroke-width="14.5"/>
<path d="M498.3 349.4L499.5 350.6" stroke="#74c07c" stroke-width="10"/>
<path d="M286.4 293.5L287.5 294.7" stroke="rgba(30,5,15,.5)" stroke-width="25.5"/>
<path d="M286.4 293.5L287.5 294.7" stroke="#cdaa21" stroke-width="22"/>
<path d="M286.0 293.1L287.1 294.2" stroke="#e0c033" stroke-width="18.5"/>
<path d="M285.6 292.6L286.8 293.8" stroke="#efd242" stroke-width="14.5"/>
<path d="M285.3 292.2L286.4 293.3" stroke="#f8dc4a" stroke-width="10"/>
<path d="M304.7 291.2L305.8 292.4" stroke="rgba(30,5,15,.5)" stroke-width="25.5"/>
<path d="M304.7 291.2L305.8 292.4" stroke="#cdaa21" stroke-width="22"/>
<path d="M304.3 290.8L305.5 291.9" stroke="#e0c033" stroke-width="18.5"/>
<path d="M304.0 290.3L305.1 291.5" stroke="#efd242" stroke-width="14.5"/>
<path d="M303.6 289.9L304.8 291.0" stroke="#f8dc4a" stroke-width="10"/>
<path d="M49.3 2.3L68.7 22.9" stroke="rgba(30,5,15,.5)" stroke-width="25.5"/>
<path d="M49.3 2.3L68.7 22.9" stroke="#cdaa21" stroke-width="22"/>
<path d="M48.9 1.8L68.4 22.5" stroke="#e0c033" stroke-width="18.5"/>
<path d="M48.5 1.4L68.0 22.0" stroke="#efd242" stroke-width="14.5"/>
<path d="M48.2 0.9L67.6 21.6" stroke="#f8dc4a" stroke-width="10"/>
<path d="M2.3 73.3L45.8 65.3L103.1 56.1" stroke="rgba(30,5,15,.5)" stroke-width="25.5"/>
<path d="M2.3 73.3L45.8 65.3" stroke="#cf6b29" stroke-width="22"/>
<path d="M1.9 72.9L45.5 64.8" stroke="#e1813c" stroke-width="18.5"/>
<path d="M1.6 72.4L45.1 64.4" stroke="#f0924b" stroke-width="14.5"/>
<path d="M1.2 72.0L44.7 63.9" stroke="#f89c54" stroke-width="10"/>
<path d="M45.8 65.3L103.1 56.1" stroke="#c23447" stroke-width="22"/>
<path d="M45.5 64.8L102.7 55.7" stroke="#d85262" stroke-width="18.5"/>
<path d="M45.1 64.4L102.4 55.2" stroke="#ea6978" stroke-width="14.5"/>
<path d="M44.7 63.9L102.0 54.8" stroke="#f47684" stroke-width="10"/>
<path d="M112.3 38.9L151.2 57.3L199.3 74.5" stroke="rgba(30,5,15,.5)" stroke-width="25.5"/>
<path d="M112.3 38.9L151.2 57.3" stroke="#cdaa21" stroke-width="22"/>
<path d="M111.9 38.5L150.8 56.8" stroke="#e0c033" stroke-width="18.5"/>
<path d="M111.5 38.0L150.5 56.4" stroke="#efd242" stroke-width="14.5"/>
<path d="M111.2 37.6L150.1 55.9" stroke="#f8dc4a" stroke-width="10"/>
<path d="M151.2 57.3L199.3 74.5" stroke="#408d49" stroke-width="22"/>
<path d="M150.8 56.8L199.0 74.0" stroke="#57a460" stroke-width="18.5"/>
<path d="M150.5 56.4L198.6 73.6" stroke="#6ab672" stroke-width="14.5"/>
<path d="M150.1 55.9L198.2 73.1" stroke="#74c07c" stroke-width="10"/>
<path d="M142.0 11.5L167.2 45.8" stroke="rgba(30,5,15,.5)" stroke-width="25.5"/>
<path d="M142.0 11.5L167.2 45.8" stroke="#3280bb" stroke-width="22"/>
<path d="M141.7 11.0L166.9 45.4" stroke="#4897d1" stroke-width="18.5"/>
<path d="M141.3 10.6L166.5 44.9" stroke="#58aae2" stroke-width="14.5"/>
<path d="M141.0 10.1L166.2 44.5" stroke="#62b4ec" stroke-width="10"/>
<path d="M185.6 36.7L217.6 57.3" stroke="rgba(30,5,15,.5)" stroke-width="25.5"/>
<path d="M185.6 36.7L217.6 57.3" stroke="#c23447" stroke-width="22"/>
<path d="M185.2 36.2L217.3 56.8" stroke="#d85262" stroke-width="18.5"/>
<path d="M184.8 35.8L216.9 56.4" stroke="#ea6978" stroke-width="14.5"/>
<path d="M184.5 35.3L216.6 55.9" stroke="#f47684" stroke-width="10"/>
<path d="M226.8 38.9L242.8 66.4" stroke="rgba(30,5,15,.5)" stroke-width="25.5"/>
<path d="M226.8 38.9L242.8 66.4" stroke="#3280bb" stroke-width="22"/>
<path d="M226.4 38.5L242.5 66.0" stroke="#4897d1" stroke-width="18.5"/>
<path d="M226.1 38.0L242.1 65.5" stroke="#58aae2" stroke-width="14.5"/>
<path d="M225.7 37.6L241.8 65.1" stroke="#62b4ec" stroke-width="10"/>
<path d="M229.1 20.6L252.0 11.5" stroke="rgba(30,5,15,.5)" stroke-width="25.5"/>
<path d="M229.1 20.6L252.0 11.5" stroke="#c23447" stroke-width="22"/>
<path d="M228.7 20.2L251.6 11.0" stroke="#d85262" stroke-width="18.5"/>
<path d="M228.4 19.7L251.3 10.6" stroke="#ea6978" stroke-width="14.5"/>
<path d="M228.0 19.3L250.9 10.1" stroke="#f47684" stroke-width="10"/>
<path d="M217.6 75.6L252.0 91.6" stroke="rgba(30,5,15,.5)" stroke-width="25.5"/>
<path d="M217.6 75.6L252.0 91.6" stroke="#c23447" stroke-width="22"/>
<path d="M217.3 75.2L251.6 91.2" stroke="#d85262" stroke-width="18.5"/>
<path d="M216.9 74.7L251.3 90.7" stroke="#ea6978" stroke-width="14.5"/>
<path d="M216.6 74.3L250.9 90.3" stroke="#f47684" stroke-width="10"/>
<path d="M183.3 107.7L197.0 121.4" stroke="rgba(30,5,15,.5)" stroke-width="25.5"/>
<path d="M183.3 107.7L197.0 121.4" stroke="#c23447" stroke-width="22"/>
<path d="M182.9 107.2L196.7 121.0" stroke="#d85262" stroke-width="18.5"/>
<path d="M182.6 106.8L196.3 120.5" stroke="#ea6978" stroke-width="14.5"/>
<path d="M182.2 106.3L195.9 120.1" stroke="#f47684" stroke-width="10"/>
<path d="M222.2 107.7L206.2 135.2L199.3 146.6" stroke="rgba(30,5,15,.5)" stroke-width="25.5"/>
<path d="M222.2 107.7L206.2 135.2" stroke="#cf6b29" stroke-width="22"/>
<path d="M221.9 107.2L205.8 134.7" stroke="#e1813c" stroke-width="18.5"/>
<path d="M221.5 106.8L205.5 134.3" stroke="#f0924b" stroke-width="14.5"/>
<path d="M221.1 106.3L205.1 133.8" stroke="#f89c54" stroke-width="10"/>
<path d="M206.2 135.2L199.3 146.6" stroke="#cf6b29" stroke-width="22"/>
<path d="M205.8 134.7L199.0 146.2" stroke="#e1813c" stroke-width="18.5"/>
<path d="M205.5 134.3L198.6 145.7" stroke="#f0924b" stroke-width="14.5"/>
<path d="M205.1 133.8L198.2 145.3" stroke="#f89c54" stroke-width="10"/>
<path d="M194.7 169.5L229.1 150.1L252.0 132.9" stroke="rgba(30,5,15,.5)" stroke-width="25.5"/>
<path d="M194.7 169.5L229.1 150.1" stroke="#3280bb" stroke-width="22"/>
<path d="M194.4 169.1L228.7 149.6" stroke="#4897d1" stroke-width="18.5"/>
<path d="M194.0 168.6L228.4 149.2" stroke="#58aae2" stroke-width="14.5"/>
<path d="M193.7 168.2L228.0 148.7" stroke="#62b4ec" stroke-width="10"/>
<path d="M229.1 150.1L252.0 132.9" stroke="#c23447" stroke-width="22"/>
<path d="M228.7 149.6L251.6 132.4" stroke="#d85262" stroke-width="18.5"/>
<path d="M228.4 149.2L251.3 132.0" stroke="#ea6978" stroke-width="14.5"/>
<path d="M228.0 148.7L250.9 131.5" stroke="#f47684" stroke-width="10"/>
<path d="M148.9 96.2L151.2 142.0" stroke="rgba(30,5,15,.5)" stroke-width="25.5"/>
<path d="M148.9 96.2L151.2 142.0" stroke="#c23447" stroke-width="22"/>
<path d="M148.6 95.8L150.8 141.6" stroke="#d85262" stroke-width="18.5"/>
<path d="M148.2 95.3L150.5 141.1" stroke="#ea6978" stroke-width="14.5"/>
<path d="M147.8 94.9L150.1 140.7" stroke="#f47684" stroke-width="10"/>
<path d="M75.6 137.5L82.5 116.8L91.6 110.0L130.6 91.6" stroke="rgba(30,5,15,.5)" stroke-width="25.5"/>
<path d="M75.6 137.5L82.5 116.8" stroke="#cf6b29" stroke-width="22"/>
<path d="M75.2 137.0L82.1 116.4" stroke="#e1813c" stroke-width="18.5"/>
<path d="M74.9 136.6L81.8 115.9" stroke="#f0924b" stroke-width="14.5"/>
<path d="M74.5 136.1L81.4 115.5" stroke="#f89c54" stroke-width="10"/>
<path d="M82.5 116.8L91.6 110.0" stroke="#ae3043" stroke-width="22"/>
<path d="M82.1 116.4L91.3 109.5" stroke="#c44457" stroke-width="18.5"/>
<path d="M81.8 115.9L90.9 109.1" stroke="#d45367" stroke-width="14.5"/>
<path d="M81.4 115.5L90.6 108.6" stroke="#de5c70" stroke-width="10"/>
<path d="M91.6 110.0L130.6 91.6" stroke="#ae3043" stroke-width="22"/>
<path d="M91.3 109.5L130.2 91.2" stroke="#c44457" stroke-width="18.5"/>
<path d="M90.9 109.1L129.9 90.7" stroke="#d45367" stroke-width="14.5"/>
<path d="M90.6 108.6L129.5 90.3" stroke="#de5c70" stroke-width="10"/>
<path d="M52.7 100.8L64.1 91.6L107.7 83.6" stroke="rgba(30,5,15,.5)" stroke-width="25.5"/>
<path d="M52.7 100.8L64.1 91.6" stroke="#cf6b29" stroke-width="22"/>
<path d="M52.3 100.4L63.8 91.2" stroke="#e1813c" stroke-width="18.5"/>
<path d="M52.0 99.9L63.4 90.7" stroke="#f0924b" stroke-width="14.5"/>
<path d="M51.6 99.5L63.1 90.3" stroke="#f89c54" stroke-width="10"/>
<path d="M64.1 91.6L107.7 83.6" stroke="#c23447" stroke-width="22"/>
<path d="M63.8 91.2L107.3 83.2" stroke="#d85262" stroke-width="18.5"/>
<path d="M63.4 90.7L107.0 82.7" stroke="#ea6978" stroke-width="14.5"/>
<path d="M63.1 90.3L106.6 82.3" stroke="#f47684" stroke-width="10"/>
<path d="M32.1 80.2L33.2 91.6L45.8 135.2" stroke="rgba(30,5,15,.5)" stroke-width="25.5"/>
<path d="M32.1 80.2L33.2 91.6" stroke="#cf6b29" stroke-width="22"/>
<path d="M31.7 79.7L32.9 91.2" stroke="#e1813c" stroke-width="18.5"/>
<path d="M31.4 79.3L32.5 90.7" stroke="#f0924b" stroke-width="14.5"/>
<path d="M31.0 78.8L32.1 90.3" stroke="#f89c54" stroke-width="10"/>
<path d="M33.2 91.6L45.8 135.2" stroke="#c23447" stroke-width="22"/>
<path d="M32.9 91.2L45.5 134.7" stroke="#d85262" stroke-width="18.5"/>
<path d="M32.5 90.7L45.1 134.3" stroke="#ea6978" stroke-width="14.5"/>
<path d="M32.1 90.3L44.7 133.8" stroke="#f47684" stroke-width="10"/>
<path d="M6.9 91.6L9.2 112.3L9.2 164.9" stroke="rgba(30,5,15,.5)" stroke-width="25.5"/>
<path d="M6.9 91.6L9.2 112.3" stroke="#c23447" stroke-width="22"/>
<path d="M6.5 91.2L8.8 111.8" stroke="#d85262" stroke-width="18.5"/>
<path d="M6.2 90.7L8.4 111.4" stroke="#ea6978" stroke-width="14.5"/>
<path d="M5.8 90.3L8.1 110.9" stroke="#f47684" stroke-width="10"/>
<path d="M9.2 112.3L9.2 164.9" stroke="#cf6b29" stroke-width="22"/>
<path d="M8.8 111.8L8.8 164.5" stroke="#e1813c" stroke-width="18.5"/>
<path d="M8.4 111.4L8.4 164.0" stroke="#f0924b" stroke-width="14.5"/>
<path d="M8.1 110.9L8.1 163.6" stroke="#f89c54" stroke-width="10"/>
<path d="M27.5 132.9L64.1 153.5" stroke="rgba(30,5,15,.5)" stroke-width="25.5"/>
<path d="M27.5 132.9L64.1 153.5" stroke="#408d49" stroke-width="22"/>
<path d="M27.1 132.4L63.8 153.0" stroke="#57a460" stroke-width="18.5"/>
<path d="M26.8 132.0L63.4 152.6" stroke="#6ab672" stroke-width="14.5"/>
<path d="M26.4 131.5L63.1 152.1" stroke="#74c07c" stroke-width="10"/>
<path d="M278.3 4.6L276.1 43.5" stroke="rgba(30,5,15,.5)" stroke-width="25.5"/>
<path d="M278.3 4.6L276.1 43.5" stroke="#3280bb" stroke-width="22"/>
<path d="M278.0 4.1L275.7 43.1" stroke="#4897d1" stroke-width="18.5"/>
<path d="M277.6 3.7L275.3 42.6" stroke="#58aae2" stroke-width="14.5"/>
<path d="M277.3 3.2L275.0 42.2" stroke="#62b4ec" stroke-width="10"/>
<path d="M302.4 16.0L323.0 41.2" stroke="rgba(30,5,15,.5)" stroke-width="25.5"/>
<path d="M302.4 16.0L323.0 41.2" stroke="#3280bb" stroke-width="22"/>
<path d="M302.0 15.6L322.7 40.8" stroke="#4897d1" stroke-width="18.5"/>
<path d="M301.7 15.1L322.3 40.3" stroke="#58aae2" stroke-width="14.5"/>
<path d="M301.3 14.7L321.9 39.9" stroke="#62b4ec" stroke-width="10"/>
<path d="M293.2 27.5L300.1 38.9L320.7 73.3" stroke="rgba(30,5,15,.5)" stroke-width="25.5"/>
<path d="M293.2 27.5L300.1 38.9" stroke="#cf6b29" stroke-width="22"/>
<path d="M292.9 27.0L299.7 38.5" stroke="#e1813c" stroke-width="18.5"/>
<path d="M292.5 26.6L299.4 38.0" stroke="#f0924b" stroke-width="14.5"/>
<path d="M292.2 26.1L299.0 37.6" stroke="#f89c54" stroke-width="10"/>
<path d="M300.1 38.9L320.7 73.3" stroke="#c23447" stroke-width="22"/>
<path d="M299.7 38.5L320.4 72.9" stroke="#d85262" stroke-width="18.5"/>
<path d="M299.4 38.0L320.0 72.4" stroke="#ea6978" stroke-width="14.5"/>
<path d="M299.0 37.6L319.6 72.0" stroke="#f47684" stroke-width="10"/>
<path d="M254.3 71.0L263.5 96.2L300.1 116.8" stroke="rgba(30,5,15,.5)" stroke-width="25.5"/>
<path d="M254.3 71.0L263.5 96.2" stroke="#c23447" stroke-width="22"/>
<path d="M253.9 70.6L263.1 95.8" stroke="#d85262" stroke-width="18.5"/>
<path d="M253.6 70.1L262.7 95.3" stroke="#ea6978" stroke-width="14.5"/>
<path d="M253.2 69.7L262.4 94.9" stroke="#f47684" stroke-width="10"/>
<path d="M263.5 96.2L300.1 116.8" stroke="#3280bb" stroke-width="22"/>
<path d="M263.1 95.8L299.7 116.4" stroke="#4897d1" stroke-width="18.5"/>
<path d="M262.7 95.3L299.4 115.9" stroke="#58aae2" stroke-width="14.5"/>
<path d="M262.4 94.9L299.0 115.5" stroke="#62b4ec" stroke-width="10"/>
<path d="M444.4 34.4L419.2 68.7L412.4 84.8" stroke="rgba(30,5,15,.5)" stroke-width="25.5"/>
<path d="M444.4 34.4L419.2 68.7" stroke="#408d49" stroke-width="22"/>
<path d="M444.1 33.9L418.9 68.3" stroke="#57a460" stroke-width="18.5"/>
<path d="M443.7 33.5L418.5 67.8" stroke="#6ab672" stroke-width="14.5"/>
<path d="M443.4 33.0L418.2 67.4" stroke="#74c07c" stroke-width="10"/>
<path d="M419.2 68.7L412.4 84.8" stroke="#cdaa21" stroke-width="22"/>
<path d="M418.9 68.3L412.0 84.3" stroke="#e0c033" stroke-width="18.5"/>
<path d="M418.5 67.8L411.6 83.9" stroke="#efd242" stroke-width="14.5"/>
<path d="M418.2 67.4L411.3 83.4" stroke="#f8dc4a" stroke-width="10"/>
<path d="M426.1 22.9L458.2 9.2L481.1 2.3" stroke="rgba(30,5,15,.5)" stroke-width="25.5"/>
<path d="M426.1 22.9L458.2 9.2" stroke="#cf6b29" stroke-width="22"/>
<path d="M425.8 22.5L457.8 8.7" stroke="#e1813c" stroke-width="18.5"/>
<path d="M425.4 22.0L457.5 8.3" stroke="#f0924b" stroke-width="14.5"/>
<path d="M425.0 21.6L457.1 7.8" stroke="#f89c54" stroke-width="10"/>
<path d="M458.2 9.2L481.1 2.3" stroke="#c23447" stroke-width="22"/>
<path d="M457.8 8.7L480.7 1.8" stroke="#d85262" stroke-width="18.5"/>
<path d="M457.5 8.3L480.4 1.4" stroke="#ea6978" stroke-width="14.5"/>
<path d="M457.1 7.8L480.0 0.9" stroke="#f47684" stroke-width="10"/>
<path d="M488.0 52.7L478.8 96.2L462.8 139.7" stroke="rgba(30,5,15,.5)" stroke-width="25.5"/>
<path d="M488.0 52.7L478.8 96.2" stroke="#c23447" stroke-width="22"/>
<path d="M487.6 52.2L478.4 95.8" stroke="#d85262" stroke-width="18.5"/>
<path d="M487.2 51.8L478.1 95.3" stroke="#ea6978" stroke-width="14.5"/>
<path d="M486.9 51.3L477.7 94.9" stroke="#f47684" stroke-width="10"/>
<path d="M478.8 96.2L462.8 139.7" stroke="#cf6b29" stroke-width="22"/>
<path d="M478.4 95.8L462.4 139.3" stroke="#e1813c" stroke-width="18.5"/>
<path d="M478.1 95.3L462.0 138.8" stroke="#f0924b" stroke-width="14.5"/>
<path d="M477.7 94.9L461.7 138.4" stroke="#f89c54" stroke-width="10"/>
<path d="M485.7 110.0L483.4 155.8L483.4 197.0" stroke="rgba(30,5,15,.5)" stroke-width="25.5"/>
<path d="M485.7 110.0L483.4 155.8" stroke="#cf6b29" stroke-width="22"/>
<path d="M485.3 109.5L483.0 155.3" stroke="#e1813c" stroke-width="18.5"/>
<path d="M485.0 109.1L482.7 154.9" stroke="#f0924b" stroke-width="14.5"/>
<path d="M484.6 108.6L482.3 154.4" stroke="#f89c54" stroke-width="10"/>
<path d="M483.4 155.8L483.4 197.0" stroke="#c23447" stroke-width="22"/>
<path d="M483.0 155.3L483.0 196.6" stroke="#d85262" stroke-width="18.5"/>
<path d="M482.7 154.9L482.7 196.1" stroke="#ea6978" stroke-width="14.5"/>
<path d="M482.3 154.4L482.3 195.7" stroke="#f47684" stroke-width="10"/>
<path d="M405.5 89.3L394.0 112.3" stroke="rgba(30,5,15,.5)" stroke-width="25.5"/>
<path d="M405.5 89.3L394.0 112.3" stroke="#c23447" stroke-width="22"/>
<path d="M405.1 88.9L393.7 111.8" stroke="#d85262" stroke-width="18.5"/>
<path d="M404.8 88.4L393.3 111.4" stroke="#ea6978" stroke-width="14.5"/>
<path d="M404.4 88.0L393.0 110.9" stroke="#f47684" stroke-width="10"/>
<path d="M435.3 103.1L415.8 139.7L391.7 176.4" stroke="rgba(30,5,15,.5)" stroke-width="25.5"/>
<path d="M435.3 103.1L415.8 139.7" stroke="#cdaa21" stroke-width="22"/>
<path d="M434.9 102.6L415.4 139.3" stroke="#e0c033" stroke-width="18.5"/>
<path d="M434.6 102.2L415.1 138.8" stroke="#efd242" stroke-width="14.5"/>
<path d="M434.2 101.7L414.7 138.4" stroke="#f8dc4a" stroke-width="10"/>
<path d="M415.8 139.7L391.7 176.4" stroke="#408d49" stroke-width="22"/>
<path d="M415.4 139.3L391.4 176.0" stroke="#57a460" stroke-width="18.5"/>
<path d="M415.1 138.8L391.0 175.5" stroke="#6ab672" stroke-width="14.5"/>
<path d="M414.7 138.4L390.7 175.1" stroke="#74c07c" stroke-width="10"/>
<path d="M398.6 144.3L368.8 176.4L350.5 192.4" stroke="rgba(30,5,15,.5)" stroke-width="25.5"/>
<path d="M398.6 144.3L368.8 176.4" stroke="#3280bb" stroke-width="22"/>
<path d="M398.3 143.9L368.5 176.0" stroke="#4897d1" stroke-width="18.5"/>
<path d="M397.9 143.4L368.1 175.5" stroke="#58aae2" stroke-width="14.5"/>
<path d="M397.5 143.0L367.8 175.1" stroke="#62b4ec" stroke-width="10"/>
<path d="M368.8 176.4L350.5 192.4" stroke="#c23447" stroke-width="22"/>
<path d="M368.5 176.0L350.2 192.0" stroke="#d85262" stroke-width="18.5"/>
<path d="M368.1 175.5L349.8 191.5" stroke="#ea6978" stroke-width="14.5"/>
<path d="M367.8 175.1L349.4 191.1" stroke="#f47684" stroke-width="10"/>
<path d="M293.2 137.5L258.9 155.8" stroke="rgba(30,5,15,.5)" stroke-width="25.5"/>
<path d="M293.2 137.5L258.9 155.8" stroke="#408d49" stroke-width="22"/>
<path d="M292.9 137.0L258.5 155.3" stroke="#57a460" stroke-width="18.5"/>
<path d="M292.5 136.6L258.2 154.9" stroke="#6ab672" stroke-width="14.5"/>
<path d="M292.2 136.1L257.8 154.4" stroke="#74c07c" stroke-width="10"/>
<path d="M261.2 176.4L256.6 197.0" stroke="rgba(30,5,15,.5)" stroke-width="25.5"/>
<path d="M261.2 176.4L256.6 197.0" stroke="#408d49" stroke-width="22"/>
<path d="M260.8 176.0L256.2 196.6" stroke="#57a460" stroke-width="18.5"/>
<path d="M260.4 175.5L255.9 196.1" stroke="#6ab672" stroke-width="14.5"/>
<path d="M260.1 175.1L255.5 195.7" stroke="#74c07c" stroke-width="10"/>
<path d="M297.8 169.5L274.9 187.9" stroke="rgba(30,5,15,.5)" stroke-width="25.5"/>
<path d="M297.8 169.5L274.9 187.9" stroke="#cf6b29" stroke-width="22"/>
<path d="M297.5 169.1L274.5 187.4" stroke="#e1813c" stroke-width="18.5"/>
<path d="M297.1 168.6L274.2 187.0" stroke="#f0924b" stroke-width="14.5"/>
<path d="M296.7 168.2L273.8 186.5" stroke="#f89c54" stroke-width="10"/>
<path d="M433.0 169.5L416.9 185.6" stroke="rgba(30,5,15,.5)" stroke-width="25.5"/>
<path d="M433.0 169.5L416.9 185.6" stroke="#c23447" stroke-width="22"/>
<path d="M432.6 169.1L416.6 185.1" stroke="#d85262" stroke-width="18.5"/>
<path d="M432.3 168.6L416.2 184.7" stroke="#ea6978" stroke-width="14.5"/>
<path d="M431.9 168.2L415.9 184.2" stroke="#f47684" stroke-width="10"/>
<path d="M451.3 181.0L446.7 197.0" stroke="rgba(30,5,15,.5)" stroke-width="25.5"/>
<path d="M451.3 181.0L446.7 197.0" stroke="#c23447" stroke-width="22"/>
<path d="M451.0 180.5L446.4 196.6" stroke="#d85262" stroke-width="18.5"/>
<path d="M450.6 180.1L446.0 196.1" stroke="#ea6978" stroke-width="14.5"/>
<path d="M450.2 179.6L445.7 195.7" stroke="#f47684" stroke-width="10"/>
<path d="M366.5 192.4L412.4 189.0L426.1 190.1" stroke="rgba(30,5,15,.5)" stroke-width="25.5"/>
<path d="M366.5 192.4L412.4 189.0" stroke="#cf6b29" stroke-width="22"/>
<path d="M366.2 192.0L412.0 188.6" stroke="#e1813c" stroke-width="18.5"/>
<path d="M365.8 191.5L411.6 188.1" stroke="#f0924b" stroke-width="14.5"/>
<path d="M365.5 191.1L411.3 187.7" stroke="#f89c54" stroke-width="10"/>
<path d="M412.4 189.0L426.1 190.1" stroke="#c23447" stroke-width="22"/>
<path d="M412.0 188.6L425.8 189.7" stroke="#d85262" stroke-width="18.5"/>
<path d="M411.6 188.1L425.4 189.2" stroke="#ea6978" stroke-width="14.5"/>
<path d="M411.3 187.7L425.0 188.8" stroke="#f47684" stroke-width="10"/>
<path d="M45.8 199.6L20.6 220.2" stroke="rgba(30,5,15,.5)" stroke-width="25.5"/>
<path d="M45.8 199.6L20.6 220.2" stroke="#3280bb" stroke-width="22"/>
<path d="M45.5 199.1L20.3 219.8" stroke="#4897d1" stroke-width="18.5"/>
<path d="M45.1 198.7L19.9 219.3" stroke="#58aae2" stroke-width="14.5"/>
<path d="M44.7 198.2L19.5 218.9" stroke="#62b4ec" stroke-width="10"/>
<path d="M174.1 215.6L201.6 236.2" stroke="rgba(30,5,15,.5)" stroke-width="25.5"/>
<path d="M174.1 215.6L201.6 236.2" stroke="#c23447" stroke-width="22"/>
<path d="M173.8 215.2L201.2 235.8" stroke="#d85262" stroke-width="18.5"/>
<path d="M173.4 214.7L200.9 235.3" stroke="#ea6978" stroke-width="14.5"/>
<path d="M173.0 214.3L200.5 234.9" stroke="#f47684" stroke-width="10"/>
<path d="M208.5 215.6L252.0 224.8" stroke="rgba(30,5,15,.5)" stroke-width="25.5"/>
<path d="M208.5 215.6L252.0 224.8" stroke="#c23447" stroke-width="22"/>
<path d="M208.1 215.2L251.6 224.3" stroke="#d85262" stroke-width="18.5"/>
<path d="M207.8 214.7L251.3 223.9" stroke="#ea6978" stroke-width="14.5"/>
<path d="M207.4 214.3L250.9 223.4" stroke="#f47684" stroke-width="10"/>
<path d="M130.6 233.9L132.9 279.8L139.7 321.0" stroke="rgba(30,5,15,.5)" stroke-width="25.5"/>
<path d="M130.6 233.9L132.9 279.8" stroke="#c23447" stroke-width="22"/>
<path d="M130.2 233.5L132.5 279.3" stroke="#d85262" stroke-width="18.5"/>
<path d="M129.9 233.0L132.2 278.9" stroke="#ea6978" stroke-width="14.5"/>
<path d="M129.5 232.6L131.8 278.4" stroke="#f47684" stroke-width="10"/>
<path d="M132.9 279.8L139.7 321.0" stroke="#3280bb" stroke-width="22"/>
<path d="M132.5 279.3L139.4 320.6" stroke="#4897d1" stroke-width="18.5"/>
<path d="M132.2 278.9L139.0 320.1" stroke="#58aae2" stroke-width="14.5"/>
<path d="M131.8 278.4L138.7 319.7" stroke="#62b4ec" stroke-width="10"/>
<path d="M181.0 247.7L181.0 282.1" stroke="rgba(30,5,15,.5)" stroke-width="25.5"/>
<path d="M181.0 247.7L181.0 282.1" stroke="#cf6b29" stroke-width="22"/>
<path d="M180.6 247.2L180.6 281.6" stroke="#e1813c" stroke-width="18.5"/>
<path d="M180.3 246.8L180.3 281.2" stroke="#f0924b" stroke-width="14.5"/>
<path d="M179.9 246.3L179.9 280.7" stroke="#f89c54" stroke-width="10"/>
<path d="M219.9 238.5L231.4 268.3" stroke="rgba(30,5,15,.5)" stroke-width="25.5"/>
<path d="M219.9 238.5L231.4 268.3" stroke="#cdaa21" stroke-width="22"/>
<path d="M219.6 238.1L231.0 267.9" stroke="#e0c033" stroke-width="18.5"/>
<path d="M219.2 237.6L230.7 267.4" stroke="#efd242" stroke-width="14.5"/>
<path d="M218.9 237.2L230.3 267.0" stroke="#f8dc4a" stroke-width="10"/>
<path d="M242.8 288.9L217.6 318.7L210.8 330.2L183.3 359.9" stroke="rgba(30,5,15,.5)" stroke-width="25.5"/>
<path d="M242.8 288.9L217.6 318.7" stroke="#cf6b29" stroke-width="22"/>
<path d="M242.5 288.5L217.3 318.3" stroke="#e1813c" stroke-width="18.5"/>
<path d="M242.1 288.0L216.9 317.8" stroke="#f0924b" stroke-width="14.5"/>
<path d="M241.8 287.6L216.6 317.4" stroke="#f89c54" stroke-width="10"/>
<path d="M217.6 318.7L210.8 330.2" stroke="#c23447" stroke-width="22"/>
<path d="M217.3 318.3L210.4 329.7" stroke="#d85262" stroke-width="18.5"/>
<path d="M216.9 317.8L210.0 329.3" stroke="#ea6978" stroke-width="14.5"/>
<path d="M216.6 317.4L209.7 328.8" stroke="#f47684" stroke-width="10"/>
<path d="M210.8 330.2L183.3 359.9" stroke="#c23447" stroke-width="22"/>
<path d="M210.4 329.7L182.9 359.5" stroke="#d85262" stroke-width="18.5"/>
<path d="M210.0 329.3L182.6 359.0" stroke="#ea6978" stroke-width="14.5"/>
<path d="M209.7 328.8L182.2 358.6" stroke="#f47684" stroke-width="10"/>
<path d="M169.5 314.1L142.0 341.6L137.5 353.1L130.6 376.0" stroke="rgba(30,5,15,.5)" stroke-width="25.5"/>
<path d="M169.5 314.1L142.0 341.6" stroke="#408d49" stroke-width="22"/>
<path d="M169.2 313.7L141.7 341.2" stroke="#57a460" stroke-width="18.5"/>
<path d="M168.8 313.2L141.3 340.7" stroke="#6ab672" stroke-width="14.5"/>
<path d="M168.5 312.8L141.0 340.3" stroke="#74c07c" stroke-width="10"/>
<path d="M142.0 341.6L137.5 353.1" stroke="#408d49" stroke-width="22"/>
<path d="M141.7 341.2L137.1 352.6" stroke="#57a460" stroke-width="18.5"/>
<path d="M141.3 340.7L136.7 352.2" stroke="#6ab672" stroke-width="14.5"/>
<path d="M141.0 340.3L136.4 351.7" stroke="#74c07c" stroke-width="10"/>
<path d="M137.5 353.1L130.6 376.0" stroke="#cdaa21" stroke-width="22"/>
<path d="M137.1 352.6L130.2 375.5" stroke="#e0c033" stroke-width="18.5"/>
<path d="M136.7 352.2L129.9 375.1" stroke="#efd242" stroke-width="14.5"/>
<path d="M136.4 351.7L129.5 374.6" stroke="#f8dc4a" stroke-width="10"/>
<path d="M29.8 286.6L57.3 309.5L103.1 332.5" stroke="rgba(30,5,15,.5)" stroke-width="25.5"/>
<path d="M29.8 286.6L57.3 309.5" stroke="#cf6b29" stroke-width="22"/>
<path d="M29.4 286.2L56.9 309.1" stroke="#e1813c" stroke-width="18.5"/>
<path d="M29.1 285.7L56.6 308.6" stroke="#f0924b" stroke-width="14.5"/>
<path d="M28.7 285.3L56.2 308.2" stroke="#f89c54" stroke-width="10"/>
<path d="M57.3 309.5L103.1 332.5" stroke="#c23447" stroke-width="22"/>
<path d="M56.9 309.1L102.7 332.0" stroke="#d85262" stroke-width="18.5"/>
<path d="M56.6 308.6L102.4 331.6" stroke="#ea6978" stroke-width="14.5"/>
<path d="M56.2 308.2L102.0 331.1" stroke="#f47684" stroke-width="10"/>
<path d="M103.1 295.8L121.4 323.3L123.7 327.9L130.6 337.0" stroke="rgba(30,5,15,.5)" stroke-width="25.5"/>
<path d="M103.1 295.8L121.4 323.3" stroke="#cf6b29" stroke-width="22"/>
<path d="M102.7 295.4L121.1 322.8" stroke="#e1813c" stroke-width="18.5"/>
<path d="M102.4 294.9L120.7 322.4" stroke="#f0924b" stroke-width="14.5"/>
<path d="M102.0 294.5L120.3 321.9" stroke="#f89c54" stroke-width="10"/>
<path d="M121.4 323.3L123.7 327.9" stroke="#cf6b29" stroke-width="22"/>
<path d="M121.1 322.8L123.4 327.4" stroke="#e1813c" stroke-width="18.5"/>
<path d="M120.7 322.4L123.0 327.0" stroke="#f0924b" stroke-width="14.5"/>
<path d="M120.3 321.9L122.6 326.5" stroke="#f89c54" stroke-width="10"/>
<path d="M123.7 327.9L130.6 337.0" stroke="#c23447" stroke-width="22"/>
<path d="M123.4 327.4L130.2 336.6" stroke="#d85262" stroke-width="18.5"/>
<path d="M123.0 327.0L129.9 336.1" stroke="#ea6978" stroke-width="14.5"/>
<path d="M122.6 326.5L129.5 335.7" stroke="#f47684" stroke-width="10"/>
<path d="M18.3 325.6L13.7 364.5" stroke="rgba(30,5,15,.5)" stroke-width="25.5"/>
<path d="M18.3 325.6L13.7 364.5" stroke="#c23447" stroke-width="22"/>
<path d="M18.0 325.1L13.4 364.1" stroke="#d85262" stroke-width="18.5"/>
<path d="M17.6 324.7L13.0 363.6" stroke="#ea6978" stroke-width="14.5"/>
<path d="M17.2 324.2L12.7 363.2" stroke="#f47684" stroke-width="10"/>
<path d="M41.2 323.3L36.7 364.5" stroke="rgba(30,5,15,.5)" stroke-width="25.5"/>
<path d="M41.2 323.3L36.7 364.5" stroke="#c23447" stroke-width="22"/>
<path d="M40.9 322.8L36.3 364.1" stroke="#d85262" stroke-width="18.5"/>
<path d="M40.5 322.4L35.9 363.6" stroke="#ea6978" stroke-width="14.5"/>
<path d="M40.2 321.9L35.6 363.2" stroke="#f47684" stroke-width="10"/>
<path d="M57.3 325.6L59.6 337.0L63.0 378.3" stroke="rgba(30,5,15,.5)" stroke-width="25.5"/>
<path d="M57.3 325.6L59.6 337.0" stroke="#cdaa21" stroke-width="22"/>
<path d="M56.9 325.1L59.2 336.6" stroke="#e0c033" stroke-width="18.5"/>
<path d="M56.6 324.7L58.8 336.1" stroke="#efd242" stroke-width="14.5"/>
<path d="M56.2 324.2L58.5 335.7" stroke="#f8dc4a" stroke-width="10"/>
<path d="M59.6 337.0L63.0 378.3" stroke="#408d49" stroke-width="22"/>
<path d="M59.2 336.6L62.6 377.8" stroke="#57a460" stroke-width="18.5"/>
<path d="M58.8 336.1L62.3 377.4" stroke="#6ab672" stroke-width="14.5"/>
<path d="M58.5 335.7L61.9 376.9" stroke="#74c07c" stroke-width="10"/>
<path d="M121.4 341.6L112.3 385.1" stroke="rgba(30,5,15,.5)" stroke-width="25.5"/>
<path d="M121.4 341.6L112.3 385.1" stroke="#c23447" stroke-width="22"/>
<path d="M121.1 341.2L111.9 384.7" stroke="#d85262" stroke-width="18.5"/>
<path d="M120.7 340.7L111.5 384.2" stroke="#ea6978" stroke-width="14.5"/>
<path d="M120.3 340.3L111.2 383.8" stroke="#f47684" stroke-width="10"/>
<path d="M25.2 373.7L34.4 385.1" stroke="rgba(30,5,15,.5)" stroke-width="25.5"/>
<path d="M25.2 373.7L34.4 385.1" stroke="#cf6b29" stroke-width="22"/>
<path d="M24.8 373.2L34.0 384.7" stroke="#e1813c" stroke-width="18.5"/>
<path d="M24.5 372.8L33.6 384.2" stroke="#f0924b" stroke-width="14.5"/>
<path d="M24.1 372.3L33.3 383.8" stroke="#f89c54" stroke-width="10"/>
<path d="M176.4 378.3L174.1 392.0" stroke="rgba(30,5,15,.5)" stroke-width="25.5"/>
<path d="M176.4 378.3L174.1 392.0" stroke="#c23447" stroke-width="22"/>
<path d="M176.0 377.8L173.8 391.6" stroke="#d85262" stroke-width="18.5"/>
<path d="M175.7 377.4L173.4 391.1" stroke="#ea6978" stroke-width="14.5"/>
<path d="M175.3 376.9L173.0 390.7" stroke="#f47684" stroke-width="10"/>
<path d="M199.3 373.7L194.7 392.0" stroke="rgba(30,5,15,.5)" stroke-width="25.5"/>
<path d="M199.3 373.7L194.7 392.0" stroke="#3280bb" stroke-width="22"/>
<path d="M199.0 373.2L194.4 391.6" stroke="#4897d1" stroke-width="18.5"/>
<path d="M198.6 372.8L194.0 391.1" stroke="#58aae2" stroke-width="14.5"/>
<path d="M198.2 372.3L193.7 390.7" stroke="#62b4ec" stroke-width="10"/>
<path d="M225.7 337.0L225.7 359.9L226.8 392.0" stroke="rgba(30,5,15,.5)" stroke-width="25.5"/>
<path d="M225.7 337.0L225.7 359.9" stroke="#c23447" stroke-width="22"/>
<path d="M225.3 336.6L225.3 359.5" stroke="#d85262" stroke-width="18.5"/>
<path d="M224.9 336.1L224.9 359.0" stroke="#ea6978" stroke-width="14.5"/>
<path d="M224.6 335.7L224.6 358.6" stroke="#f47684" stroke-width="10"/>
<path d="M225.7 359.9L226.8 392.0" stroke="#cf6b29" stroke-width="22"/>
<path d="M225.3 359.5L226.4 391.6" stroke="#e1813c" stroke-width="18.5"/>
<path d="M224.9 359.0L226.1 391.1" stroke="#f0924b" stroke-width="14.5"/>
<path d="M224.6 358.6L225.7 390.7" stroke="#f89c54" stroke-width="10"/>
<path d="M247.4 359.9L242.8 380.6" stroke="rgba(30,5,15,.5)" stroke-width="25.5"/>
<path d="M247.4 359.9L242.8 380.6" stroke="#408d49" stroke-width="22"/>
<path d="M247.1 359.5L242.5 380.1" stroke="#57a460" stroke-width="18.5"/>
<path d="M246.7 359.0L242.1 379.7" stroke="#6ab672" stroke-width="14.5"/>
<path d="M246.3 358.6L241.8 379.2" stroke="#74c07c" stroke-width="10"/>
<path d="M327.6 243.1L309.3 261.4L295.5 279.8" stroke="rgba(30,5,15,.5)" stroke-width="25.5"/>
<path d="M327.6 243.1L309.3 261.4" stroke="#408d49" stroke-width="22"/>
<path d="M327.2 242.7L308.9 261.0" stroke="#57a460" stroke-width="18.5"/>
<path d="M326.9 242.2L308.6 260.5" stroke="#6ab672" stroke-width="14.5"/>
<path d="M326.5 241.8L308.2 260.1" stroke="#74c07c" stroke-width="10"/>
<path d="M309.3 261.4L295.5 279.8" stroke="#408d49" stroke-width="22"/>
<path d="M308.9 261.0L295.2 279.3" stroke="#57a460" stroke-width="18.5"/>
<path d="M308.6 260.5L294.8 278.9" stroke="#6ab672" stroke-width="14.5"/>
<path d="M308.2 260.1L294.4 278.4" stroke="#74c07c" stroke-width="10"/>
<path d="M295.5 254.6L274.9 286.6L265.7 295.8L256.6 318.7" stroke="rgba(30,5,15,.5)" stroke-width="25.5"/>
<path d="M295.5 254.6L274.9 286.6" stroke="#c23447" stroke-width="22"/>
<path d="M295.2 254.1L274.5 286.2" stroke="#d85262" stroke-width="18.5"/>
<path d="M294.8 253.7L274.2 285.7" stroke="#ea6978" stroke-width="14.5"/>
<path d="M294.4 253.2L273.8 285.3" stroke="#f47684" stroke-width="10"/>
<path d="M274.9 286.6L265.7 295.8" stroke="#cf6b29" stroke-width="22"/>
<path d="M274.5 286.2L265.4 295.4" stroke="#e1813c" stroke-width="18.5"/>
<path d="M274.2 285.7L265.0 294.9" stroke="#f0924b" stroke-width="14.5"/>
<path d="M273.8 285.3L264.7 294.5" stroke="#f89c54" stroke-width="10"/>
<path d="M265.7 295.8L256.6 318.7" stroke="#cf6b29" stroke-width="22"/>
<path d="M265.4 295.4L256.2 318.3" stroke="#e1813c" stroke-width="18.5"/>
<path d="M265.0 294.9L255.9 317.8" stroke="#f0924b" stroke-width="14.5"/>
<path d="M264.7 294.5L255.5 317.4" stroke="#f89c54" stroke-width="10"/>
<path d="M336.8 252.3L341.3 282.1" stroke="rgba(30,5,15,.5)" stroke-width="25.5"/>
<path d="M336.8 252.3L341.3 282.1" stroke="#cf6b29" stroke-width="22"/>
<path d="M336.4 251.8L341.0 281.6" stroke="#e1813c" stroke-width="18.5"/>
<path d="M336.0 251.4L340.6 281.2" stroke="#f0924b" stroke-width="14.5"/>
<path d="M335.7 250.9L340.3 280.7" stroke="#f89c54" stroke-width="10"/>
<path d="M465.1 224.8L437.6 250.0L428.4 256.9" stroke="rgba(30,5,15,.5)" stroke-width="25.5"/>
<path d="M465.1 224.8L437.6 250.0" stroke="#3280bb" stroke-width="22"/>
<path d="M464.7 224.3L437.2 249.5" stroke="#4897d1" stroke-width="18.5"/>
<path d="M464.3 223.9L436.8 249.1" stroke="#58aae2" stroke-width="14.5"/>
<path d="M464.0 223.4L436.5 248.6" stroke="#62b4ec" stroke-width="10"/>
<path d="M437.6 250.0L428.4 256.9" stroke="#c23447" stroke-width="22"/>
<path d="M437.2 249.5L428.0 256.4" stroke="#d85262" stroke-width="18.5"/>
<path d="M436.8 249.1L427.7 256.0" stroke="#ea6978" stroke-width="14.5"/>
<path d="M436.5 248.6L427.3 255.5" stroke="#f47684" stroke-width="10"/>
<path d="M465.1 252.3L442.1 268.3" stroke="rgba(30,5,15,.5)" stroke-width="25.5"/>
<path d="M465.1 252.3L442.1 268.3" stroke="#c23447" stroke-width="22"/>
<path d="M464.7 251.8L441.8 267.9" stroke="#d85262" stroke-width="18.5"/>
<path d="M464.3 251.4L441.4 267.4" stroke="#ea6978" stroke-width="14.5"/>
<path d="M464.0 250.9L441.1 267.0" stroke="#f47684" stroke-width="10"/>
<path d="M408.9 286.6L421.5 316.4L455.9 355.4" stroke="rgba(30,5,15,.5)" stroke-width="25.5"/>
<path d="M408.9 286.6L421.5 316.4" stroke="#cdaa21" stroke-width="22"/>
<path d="M408.6 286.2L421.2 316.0" stroke="#e0c033" stroke-width="18.5"/>
<path d="M408.2 285.7L420.8 315.5" stroke="#efd242" stroke-width="14.5"/>
<path d="M407.9 285.3L420.5 315.1" stroke="#f8dc4a" stroke-width="10"/>
<path d="M421.5 316.4L455.9 355.4" stroke="#408d49" stroke-width="22"/>
<path d="M421.2 316.0L455.5 354.9" stroke="#57a460" stroke-width="18.5"/>
<path d="M420.8 315.5L455.2 354.5" stroke="#6ab672" stroke-width="14.5"/>
<path d="M420.5 315.1L454.8 354.0" stroke="#74c07c" stroke-width="10"/>
<path d="M481.1 215.6L475.4 245.4L465.1 286.6" stroke="rgba(30,5,15,.5)" stroke-width="25.5"/>
<path d="M481.1 215.6L475.4 245.4" stroke="#cdaa21" stroke-width="22"/>
<path d="M480.7 215.2L475.0 245.0" stroke="#e0c033" stroke-width="18.5"/>
<path d="M480.4 214.7L474.6 244.5" stroke="#efd242" stroke-width="14.5"/>
<path d="M480.0 214.3L474.3 244.1" stroke="#f8dc4a" stroke-width="10"/>
<path d="M475.4 245.4L465.1 286.6" stroke="#408d49" stroke-width="22"/>
<path d="M475.0 245.0L464.7 286.2" stroke="#57a460" stroke-width="18.5"/>
<path d="M474.6 244.5L464.3 285.7" stroke="#6ab672" stroke-width="14.5"/>
<path d="M474.3 244.1L464.0 285.3" stroke="#74c07c" stroke-width="10"/>
<path d="M497.1 208.7L498.3 222.5L494.8 240.8L492.5 279.8" stroke="rgba(30,5,15,.5)" stroke-width="25.5"/>
<path d="M497.1 208.7L498.3 222.5" stroke="#cf6b29" stroke-width="22"/>
<path d="M496.8 208.3L497.9 222.0" stroke="#e1813c" stroke-width="18.5"/>
<path d="M496.4 207.8L497.6 221.6" stroke="#f0924b" stroke-width="14.5"/>
<path d="M496.1 207.4L497.2 221.1" stroke="#f89c54" stroke-width="10"/>
<path d="M498.3 222.5L494.8 240.8" stroke="#c23447" stroke-width="22"/>
<path d="M497.9 222.0L494.5 240.4" stroke="#d85262" stroke-width="18.5"/>
<path d="M497.6 221.6L494.1 239.9" stroke="#ea6978" stroke-width="14.5"/>
<path d="M497.2 221.1L493.8 239.5" stroke="#f47684" stroke-width="10"/>
<path d="M494.8 240.8L492.5 279.8" stroke="#c23447" stroke-width="22"/>
<path d="M494.5 240.4L492.2 279.3" stroke="#d85262" stroke-width="18.5"/>
<path d="M494.1 239.9L491.8 278.9" stroke="#ea6978" stroke-width="14.5"/>
<path d="M493.8 239.5L491.5 278.4" stroke="#f47684" stroke-width="10"/>
<path d="M490.3 293.5L488.0 332.5" stroke="rgba(30,5,15,.5)" stroke-width="25.5"/>
<path d="M490.3 293.5L488.0 332.5" stroke="#408d49" stroke-width="22"/>
<path d="M489.9 293.1L487.6 332.0" stroke="#57a460" stroke-width="18.5"/>
<path d="M489.5 292.6L487.2 331.6" stroke="#6ab672" stroke-width="14.5"/>
<path d="M489.2 292.2L486.9 331.1" stroke="#74c07c" stroke-width="10"/>
<path d="M444.4 311.8L469.6 343.9L501.7 373.7" stroke="rgba(30,5,15,.5)" stroke-width="25.5"/>
<path d="M444.4 311.8L469.6 343.9" stroke="#c23447" stroke-width="22"/>
<path d="M444.1 311.4L469.3 343.5" stroke="#d85262" stroke-width="18.5"/>
<path d="M443.7 310.9L468.9 343.0" stroke="#ea6978" stroke-width="14.5"/>
<path d="M443.4 310.5L468.6 342.6" stroke="#f47684" stroke-width="10"/>
<path d="M469.6 343.9L501.7 373.7" stroke="#cf6b29" stroke-width="22"/>
<path d="M469.3 343.5L501.4 373.2" stroke="#e1813c" stroke-width="18.5"/>
<path d="M468.9 343.0L501.0 372.8" stroke="#f0924b" stroke-width="14.5"/>
<path d="M468.6 342.6L500.6 372.3" stroke="#f89c54" stroke-width="10"/>
<path d="M281.8 307.3L265.7 337.0L263.5 343.9L254.3 366.8" stroke="rgba(30,5,15,.5)" stroke-width="25.5"/>
<path d="M281.8 307.3L265.7 337.0" stroke="#cdaa21" stroke-width="22"/>
<path d="M281.4 306.8L265.4 336.6" stroke="#e0c033" stroke-width="18.5"/>
<path d="M281.1 306.4L265.0 336.1" stroke="#efd242" stroke-width="14.5"/>
<path d="M280.7 305.9L264.7 335.7" stroke="#f8dc4a" stroke-width="10"/>
<path d="M265.7 337.0L263.5 343.9" stroke="#408d49" stroke-width="22"/>
<path d="M265.4 336.6L263.1 343.5" stroke="#57a460" stroke-width="18.5"/>
<path d="M265.0 336.1L262.7 343.0" stroke="#6ab672" stroke-width="14.5"/>
<path d="M264.7 335.7L262.4 342.6" stroke="#74c07c" stroke-width="10"/>
<path d="M263.5 343.9L254.3 366.8" stroke="#408d49" stroke-width="22"/>
<path d="M263.1 343.5L253.9 366.4" stroke="#57a460" stroke-width="18.5"/>
<path d="M262.7 343.0L253.6 365.9" stroke="#6ab672" stroke-width="14.5"/>
<path d="M262.4 342.6L253.2 365.5" stroke="#74c07c" stroke-width="10"/>
<path d="M309.3 316.4L350.5 329.0L373.4 335.9" stroke="rgba(30,5,15,.5)" stroke-width="25.5"/>
<path d="M309.3 316.4L350.5 329.0" stroke="#c23447" stroke-width="22"/>
<path d="M308.9 316.0L350.2 328.6" stroke="#d85262" stroke-width="18.5"/>
<path d="M308.6 315.5L349.8 328.1" stroke="#ea6978" stroke-width="14.5"/>
<path d="M308.2 315.1L349.4 327.7" stroke="#f47684" stroke-width="10"/>
<path d="M350.5 329.0L373.4 335.9" stroke="#cf6b29" stroke-width="22"/>
<path d="M350.2 328.6L373.1 335.4" stroke="#e1813c" stroke-width="18.5"/>
<path d="M349.8 328.1L372.7 335.0" stroke="#f0924b" stroke-width="14.5"/>
<path d="M349.4 327.7L372.3 334.5" stroke="#f89c54" stroke-width="10"/>
<path d="M274.9 343.9L286.4 337.0L325.3 334.7" stroke="rgba(30,5,15,.5)" stroke-width="25.5"/>
<path d="M274.9 343.9L286.4 337.0" stroke="#c23447" stroke-width="22"/>
<path d="M274.5 343.5L286.0 336.6" stroke="#d85262" stroke-width="18.5"/>
<path d="M274.2 343.0L285.6 336.1" stroke="#ea6978" stroke-width="14.5"/>
<path d="M273.8 342.6L285.3 335.7" stroke="#f47684" stroke-width="10"/>
<path d="M286.4 337.0L325.3 334.7" stroke="#3280bb" stroke-width="22"/>
<path d="M286.0 336.6L325.0 334.3" stroke="#4897d1" stroke-width="18.5"/>
<path d="M285.6 336.1L324.6 333.8" stroke="#58aae2" stroke-width="14.5"/>
<path d="M285.3 335.7L324.2 333.4" stroke="#62b4ec" stroke-width="10"/>
<path d="M281.8 359.9L327.6 346.2" stroke="rgba(30,5,15,.5)" stroke-width="25.5"/>
<path d="M281.8 359.9L327.6 346.2" stroke="#c23447" stroke-width="22"/>
<path d="M281.4 359.5L327.2 345.8" stroke="#d85262" stroke-width="18.5"/>
<path d="M281.1 359.0L326.9 345.3" stroke="#ea6978" stroke-width="14.5"/>
<path d="M280.7 358.6L326.5 344.9" stroke="#f47684" stroke-width="10"/>
<path d="M320.7 364.5L327.6 392.0" stroke="rgba(30,5,15,.5)" stroke-width="25.5"/>
<path d="M320.7 364.5L327.6 392.0" stroke="#408d49" stroke-width="22"/>
<path d="M320.4 364.1L327.2 391.6" stroke="#57a460" stroke-width="18.5"/>
<path d="M320.0 363.6L326.9 391.1" stroke="#6ab672" stroke-width="14.5"/>
<path d="M319.6 363.2L326.5 390.7" stroke="#74c07c" stroke-width="10"/>
<path d="M391.7 341.6L403.2 376.0L412.4 385.1" stroke="rgba(30,5,15,.5)" stroke-width="25.5"/>
<path d="M391.7 341.6L403.2 376.0" stroke="#cf6b29" stroke-width="22"/>
<path d="M391.4 341.2L402.8 375.5" stroke="#e1813c" stroke-width="18.5"/>
<path d="M391.0 340.7L402.5 375.1" stroke="#f0924b" stroke-width="14.5"/>
<path d="M390.7 340.3L402.1 374.6" stroke="#f89c54" stroke-width="10"/>
<path d="M403.2 376.0L412.4 385.1" stroke="#c23447" stroke-width="22"/>
<path d="M402.8 375.5L412.0 384.7" stroke="#d85262" stroke-width="18.5"/>
<path d="M402.5 375.1L411.6 384.2" stroke="#ea6978" stroke-width="14.5"/>
<path d="M402.1 374.6L411.3 383.8" stroke="#f47684" stroke-width="10"/>
<path d="M421.5 369.1L449.0 385.1" stroke="rgba(30,5,15,.5)" stroke-width="25.5"/>
<path d="M421.5 369.1L449.0 385.1" stroke="#3280bb" stroke-width="22"/>
<path d="M421.2 368.7L448.7 384.7" stroke="#4897d1" stroke-width="18.5"/>
<path d="M420.8 368.2L448.3 384.2" stroke="#58aae2" stroke-width="14.5"/>
<path d="M420.5 367.8L447.9 383.8" stroke="#62b4ec" stroke-width="10"/>
<path d="M481.1 376.0L474.2 392.0" stroke="rgba(30,5,15,.5)" stroke-width="25.5"/>
<path d="M481.1 376.0L474.2 392.0" stroke="#c23447" stroke-width="22"/>
<path d="M480.7 375.5L473.9 391.6" stroke="#d85262" stroke-width="18.5"/>
<path d="M480.4 375.1L473.5 391.1" stroke="#ea6978" stroke-width="14.5"/>
<path d="M480.0 374.6L473.1 390.7" stroke="#f47684" stroke-width="10"/>
<path d="M105.4 181.0L146.6 162.7L192.4 144.3" stroke="rgba(30,5,15,.5)" stroke-width="25.5"/>
<path d="M105.4 181.0L146.6 162.7" stroke="#cdaa21" stroke-width="22"/>
<path d="M105.0 180.5L146.3 162.2" stroke="#e0c033" stroke-width="18.5"/>
<path d="M104.7 180.1L145.9 161.8" stroke="#efd242" stroke-width="14.5"/>
<path d="M104.3 179.6L145.5 161.3" stroke="#f8dc4a" stroke-width="10"/>
<path d="M146.6 162.7L192.4 144.3" stroke="#408d49" stroke-width="22"/>
<path d="M146.3 162.2L192.1 143.9" stroke="#57a460" stroke-width="18.5"/>
<path d="M145.9 161.8L191.7 143.4" stroke="#6ab672" stroke-width="14.5"/>
<path d="M145.5 161.3L191.4 143.0" stroke="#74c07c" stroke-width="10"/>
<path d="M100.8 116.8L128.3 160.4" stroke="rgba(30,5,15,.5)" stroke-width="25.5"/>
<path d="M100.8 116.8L128.3 160.4" stroke="#c23447" stroke-width="22"/>
<path d="M100.4 116.4L127.9 159.9" stroke="#d85262" stroke-width="18.5"/>
<path d="M100.1 115.9L127.6 159.5" stroke="#ea6978" stroke-width="14.5"/>
<path d="M99.7 115.5L127.2 159.0" stroke="#f47684" stroke-width="10"/>
<path d="M80.2 155.8L52.7 181.0L32.1 197.0" stroke="rgba(30,5,15,.5)" stroke-width="25.5"/>
<path d="M80.2 155.8L52.7 181.0" stroke="#c23447" stroke-width="22"/>
<path d="M79.8 155.3L52.3 180.5" stroke="#d85262" stroke-width="18.5"/>
<path d="M79.5 154.9L52.0 180.1" stroke="#ea6978" stroke-width="14.5"/>
<path d="M79.1 154.4L51.6 179.6" stroke="#f47684" stroke-width="10"/>
<path d="M52.7 181.0L32.1 197.0" stroke="#3280bb" stroke-width="22"/>
<path d="M52.3 180.5L31.7 196.6" stroke="#4897d1" stroke-width="18.5"/>
<path d="M52.0 180.1L31.4 196.1" stroke="#58aae2" stroke-width="14.5"/>
<path d="M51.6 179.6L31.0 195.7" stroke="#62b4ec" stroke-width="10"/>
<path d="M382.6 13.7L383.7 50.4L378.0 100.8" stroke="rgba(30,5,15,.5)" stroke-width="25.5"/>
<path d="M382.6 13.7L383.7 50.4" stroke="#cdaa21" stroke-width="22"/>
<path d="M382.2 13.3L383.4 50.0" stroke="#e0c033" stroke-width="18.5"/>
<path d="M381.9 12.8L383.0 49.5" stroke="#efd242" stroke-width="14.5"/>
<path d="M381.5 12.4L382.6 49.1" stroke="#f8dc4a" stroke-width="10"/>
<path d="M383.7 50.4L378.0 100.8" stroke="#408d49" stroke-width="22"/>
<path d="M383.4 50.0L377.6 100.4" stroke="#57a460" stroke-width="18.5"/>
<path d="M383.0 49.5L377.3 99.9" stroke="#6ab672" stroke-width="14.5"/>
<path d="M382.6 49.1L376.9 99.5" stroke="#74c07c" stroke-width="10"/>
<path d="M345.9 68.7L331.0 107.7L309.3 158.1" stroke="rgba(30,5,15,.5)" stroke-width="25.5"/>
<path d="M345.9 68.7L331.0 107.7" stroke="#c23447" stroke-width="22"/>
<path d="M345.6 68.3L330.7 107.2" stroke="#d85262" stroke-width="18.5"/>
<path d="M345.2 67.8L330.3 106.8" stroke="#ea6978" stroke-width="14.5"/>
<path d="M344.8 67.4L330.0 106.3" stroke="#f47684" stroke-width="10"/>
<path d="M331.0 107.7L309.3 158.1" stroke="#cf6b29" stroke-width="22"/>
<path d="M330.7 107.2L308.9 157.6" stroke="#e1813c" stroke-width="18.5"/>
<path d="M330.3 106.8L308.6 157.2" stroke="#f0924b" stroke-width="14.5"/>
<path d="M330.0 106.3L308.2 156.7" stroke="#f89c54" stroke-width="10"/>
<path d="M87.1 220.2L98.5 261.4L121.4 302.7" stroke="rgba(30,5,15,.5)" stroke-width="25.5"/>
<path d="M87.1 220.2L98.5 261.4" stroke="#408d49" stroke-width="22"/>
<path d="M86.7 219.8L98.2 261.0" stroke="#57a460" stroke-width="18.5"/>
<path d="M86.3 219.3L97.8 260.5" stroke="#6ab672" stroke-width="14.5"/>
<path d="M86.0 218.9L97.4 260.1" stroke="#74c07c" stroke-width="10"/>
<path d="M98.5 261.4L121.4 302.7" stroke="#cdaa21" stroke-width="22"/>
<path d="M98.2 261.0L121.1 302.2" stroke="#e0c033" stroke-width="18.5"/>
<path d="M97.8 260.5L120.7 301.8" stroke="#efd242" stroke-width="14.5"/>
<path d="M97.4 260.1L120.3 301.3" stroke="#f8dc4a" stroke-width="10"/>
<path d="M130.6 213.3L171.8 204.2L224.5 198.4" stroke="rgba(30,5,15,.5)" stroke-width="25.5"/>
<path d="M130.6 213.3L171.8 204.2" stroke="#cf6b29" stroke-width="22"/>
<path d="M130.2 212.9L171.5 203.7" stroke="#e1813c" stroke-width="18.5"/>
<path d="M129.9 212.4L171.1 203.3" stroke="#f0924b" stroke-width="14.5"/>
<path d="M129.5 212.0L170.7 202.8" stroke="#f89c54" stroke-width="10"/>
<path d="M171.8 204.2L224.5 198.4" stroke="#c23447" stroke-width="22"/>
<path d="M171.5 203.7L224.2 198.0" stroke="#d85262" stroke-width="18.5"/>
<path d="M171.1 203.3L223.8 197.5" stroke="#ea6978" stroke-width="14.5"/>
<path d="M170.7 202.8L223.4 197.1" stroke="#f47684" stroke-width="10"/>
<path d="M148.9 298.1L190.1 293.5L238.3 275.2" stroke="rgba(30,5,15,.5)" stroke-width="25.5"/>
<path d="M148.9 298.1L190.1 293.5" stroke="#cf6b29" stroke-width="22"/>
<path d="M148.6 297.6L189.8 293.1" stroke="#e1813c" stroke-width="18.5"/>
<path d="M148.2 297.2L189.4 292.6" stroke="#f0924b" stroke-width="14.5"/>
<path d="M147.8 296.7L189.1 292.2" stroke="#f89c54" stroke-width="10"/>
<path d="M190.1 293.5L238.3 275.2" stroke="#c23447" stroke-width="22"/>
<path d="M189.8 293.1L237.9 274.7" stroke="#d85262" stroke-width="18.5"/>
<path d="M189.4 292.6L237.5 274.3" stroke="#ea6978" stroke-width="14.5"/>
<path d="M189.1 292.2L237.2 273.8" stroke="#f47684" stroke-width="10"/>
<path d="M45.8 283.2L91.6 285.5" stroke="rgba(30,5,15,.5)" stroke-width="25.5"/>
<path d="M45.8 283.2L91.6 285.5" stroke="#408d49" stroke-width="22"/>
<path d="M45.5 282.8L91.3 285.0" stroke="#57a460" stroke-width="18.5"/>
<path d="M45.1 282.3L90.9 284.6" stroke="#6ab672" stroke-width="14.5"/>
<path d="M44.7 281.9L90.6 284.1" stroke="#74c07c" stroke-width="10"/>
<path d="M22.9 381.7L20.6 392.0" stroke="rgba(30,5,15,.5)" stroke-width="25.5"/>
<path d="M22.9 381.7L20.6 392.0" stroke="#cdaa21" stroke-width="22"/>
<path d="M22.5 381.3L20.3 391.6" stroke="#e0c033" stroke-width="18.5"/>
<path d="M22.2 380.8L19.9 391.1" stroke="#efd242" stroke-width="14.5"/>
<path d="M21.8 380.4L19.5 390.7" stroke="#f8dc4a" stroke-width="10"/>
<path d="M366.5 199.6L416.9 199.6L460.5 216.8" stroke="rgba(30,5,15,.5)" stroke-width="25.5"/>
<path d="M366.5 199.6L416.9 199.6" stroke="#cf6b29" stroke-width="22"/>
<path d="M366.2 199.1L416.6 199.1" stroke="#e1813c" stroke-width="18.5"/>
<path d="M365.8 198.7L416.2 198.7" stroke="#f0924b" stroke-width="14.5"/>
<path d="M365.5 198.2L415.9 198.2" stroke="#f89c54" stroke-width="10"/>
<path d="M416.9 199.6L460.5 216.8" stroke="#c23447" stroke-width="22"/>
<path d="M416.6 199.1L460.1 216.3" stroke="#d85262" stroke-width="18.5"/>
<path d="M416.2 198.7L459.8 215.9" stroke="#ea6978" stroke-width="14.5"/>
<path d="M415.9 198.2L459.4 215.4" stroke="#f47684" stroke-width="10"/>
<path d="M269.2 248.8L307.0 225.9L348.2 223.6" stroke="rgba(30,5,15,.5)" stroke-width="25.5"/>
<path d="M269.2 248.8L307.0 225.9" stroke="#c23447" stroke-width="22"/>
<path d="M268.8 248.4L306.6 225.5" stroke="#d85262" stroke-width="18.5"/>
<path d="M268.5 247.9L306.3 225.0" stroke="#ea6978" stroke-width="14.5"/>
<path d="M268.1 247.5L305.9 224.6" stroke="#f47684" stroke-width="10"/>
<path d="M307.0 225.9L348.2 223.6" stroke="#3280bb" stroke-width="22"/>
<path d="M306.6 225.5L347.9 223.2" stroke="#4897d1" stroke-width="18.5"/>
<path d="M306.3 225.0L347.5 222.7" stroke="#58aae2" stroke-width="14.5"/>
<path d="M305.9 224.6L347.1 222.3" stroke="#62b4ec" stroke-width="10"/>
<path d="M383.7 220.2L368.8 254.6L357.4 306.1" stroke="rgba(30,5,15,.5)" stroke-width="25.5"/>
<path d="M383.7 220.2L368.8 254.6" stroke="#3280bb" stroke-width="22"/>
<path d="M383.4 219.8L368.5 254.1" stroke="#4897d1" stroke-width="18.5"/>
<path d="M383.0 219.3L368.1 253.7" stroke="#58aae2" stroke-width="14.5"/>
<path d="M382.6 218.9L367.8 253.2" stroke="#62b4ec" stroke-width="10"/>
<path d="M368.8 254.6L357.4 306.1" stroke="#c23447" stroke-width="22"/>
<path d="M368.5 254.1L357.0 305.7" stroke="#d85262" stroke-width="18.5"/>
<path d="M368.1 253.7L356.7 305.2" stroke="#ea6978" stroke-width="14.5"/>
<path d="M367.8 253.2L356.3 304.8" stroke="#f47684" stroke-width="10"/>
<path d="M391.7 252.3L426.1 275.2L458.2 300.4" stroke="rgba(30,5,15,.5)" stroke-width="25.5"/>
<path d="M391.7 252.3L426.1 275.2" stroke="#cdaa21" stroke-width="22"/>
<path d="M391.4 251.8L425.8 274.7" stroke="#e0c033" stroke-width="18.5"/>
<path d="M391.0 251.4L425.4 274.3" stroke="#efd242" stroke-width="14.5"/>
<path d="M390.7 250.9L425.0 273.8" stroke="#f8dc4a" stroke-width="10"/>
<path d="M426.1 275.2L458.2 300.4" stroke="#408d49" stroke-width="22"/>
<path d="M425.8 274.7L457.8 299.9" stroke="#57a460" stroke-width="18.5"/>
<path d="M425.4 274.3L457.5 299.5" stroke="#6ab672" stroke-width="14.5"/>
<path d="M425.0 273.8L457.1 299.0" stroke="#74c07c" stroke-width="10"/>
<path d="M379.1 303.8L412.4 332.5L442.1 365.7" stroke="rgba(30,5,15,.5)" stroke-width="25.5"/>
<path d="M379.1 303.8L412.4 332.5" stroke="#c23447" stroke-width="22"/>
<path d="M378.8 303.4L412.0 332.0" stroke="#d85262" stroke-width="18.5"/>
<path d="M378.4 302.9L411.6 331.6" stroke="#ea6978" stroke-width="14.5"/>
<path d="M378.1 302.5L411.3 331.1" stroke="#f47684" stroke-width="10"/>
<path d="M412.4 332.5L442.1 365.7" stroke="#3280bb" stroke-width="22"/>
<path d="M412.0 332.0L441.8 365.2" stroke="#4897d1" stroke-width="18.5"/>
<path d="M411.6 331.6L441.4 364.8" stroke="#58aae2" stroke-width="14.5"/>
<path d="M411.3 331.1L441.1 364.3" stroke="#62b4ec" stroke-width="10"/>
<path d="M344.8 357.7L380.3 373.7L398.6 392.0" stroke="rgba(30,5,15,.5)" stroke-width="25.5"/>
<path d="M344.8 357.7L380.3 373.7" stroke="#cdaa21" stroke-width="22"/>
<path d="M344.4 357.2L379.9 373.2" stroke="#e0c033" stroke-width="18.5"/>
<path d="M344.1 356.8L379.6 372.8" stroke="#efd242" stroke-width="14.5"/>
<path d="M343.7 356.3L379.2 372.3" stroke="#f8dc4a" stroke-width="10"/>
<path d="M380.3 373.7L398.6 392.0" stroke="#408d49" stroke-width="22"/>
<path d="M379.9 373.2L398.3 391.6" stroke="#57a460" stroke-width="18.5"/>
<path d="M379.6 372.8L397.9 391.1" stroke="#6ab672" stroke-width="14.5"/>
<path d="M379.2 372.3L397.5 390.7" stroke="#74c07c" stroke-width="10"/>
<path d="M313.9 163.8L355.1 138.6L400.9 123.7" stroke="rgba(30,5,15,.5)" stroke-width="25.5"/>
<path d="M313.9 163.8L355.1 138.6" stroke="#cf6b29" stroke-width="22"/>
<path d="M313.5 163.4L354.7 138.2" stroke="#e1813c" stroke-width="18.5"/>
<path d="M313.1 162.9L354.4 137.7" stroke="#f0924b" stroke-width="14.5"/>
<path d="M312.8 162.5L354.0 137.3" stroke="#f89c54" stroke-width="10"/>
<path d="M355.1 138.6L400.9 123.7" stroke="#c23447" stroke-width="22"/>
<path d="M354.7 138.2L400.6 123.3" stroke="#d85262" stroke-width="18.5"/>
<path d="M354.4 137.7L400.2 122.8" stroke="#ea6978" stroke-width="14.5"/>
<path d="M354.0 137.3L399.8 122.4" stroke="#f47684" stroke-width="10"/>
</g>
<rect width="504" height="390" fill="rgba(255,255,255,0.001)" filter="url(#sug)" opacity="0.28"/>
</svg>
 </div>
 <div class="t" style="left:8px;top:562px">Photo by <a class="l">Mockaroon</a> on <a class="l">Unsplash</a>.</div>
 <svg class="abs" style="left:8px;top:597px" width="23" height="23" viewBox="0 0 24 24"><g fill="#000"><circle cx="12" cy="13.500" r="6"/><rect x="9.500" y="2.500" width="5" height="6" rx=".8"/><rect x=".8" y="12.600" width="3" height="1.800"/><rect x="20.200" y="12.600" width="3" height="1.800"/><rect x="11.100" y="21" width="1.800" height="2.800"/><rect x="3.200" y="19.300" width="2.800" height="1.800" transform="rotate(-45 4.600 20.200)"/><rect x="18" y="19.300" width="2.800" height="1.800" transform="rotate(45 19.400 20.200)"/></g></svg>
 <div class="t" style="left:37px;top:599px">Some icon</div>
 <svg class="abs" style="left:116px;top:597px" width="23" height="23" viewBox="0 0 24 24"><g fill="#000"><circle cx="12" cy="12" r="5.800"/><rect x="11.100" y=".5" width="1.800" height="3"/><rect x="11.100" y="20.500" width="1.800" height="3"/><rect x=".5" y="11.100" width="3" height="1.800"/><rect x="20.500" y="11.100" width="3" height="1.800"/><rect x="3" y="3.700" width="2.800" height="1.800" transform="rotate(45 4.400 4.600)"/><rect x="18.200" y="3.700" width="2.800" height="1.800" transform="rotate(-45 19.600 4.600)"/><rect x="3" y="18.500" width="2.800" height="1.800" transform="rotate(-45 4.400 19.400)"/><rect x="18.200" y="18.500" width="2.800" height="1.800" transform="rotate(45 19.600 19.400)"/></g></svg>
 <div class="t" style="left:145px;top:599px">Some icon</div>
</div>
<div id="dt">
<div class="abs" style="left:0;top:0;width:1px;height:660px;background:#4b4b4b;z-index:5"></div>
<div class="bar" style="top:0;height:27px;border-bottom:1px solid #474747"></div>
<div class="abs" style="left:279px;top:0;width:69px;height:26px;background:#000"></div>
<svg class="abs" style="left:10px;top:6px" width="16" height="16" viewBox="0 0 16 16"><path d="M6.500 12.800H2.600a1 1 0 0 1-1-1V2.600a1 1 0 0 1 1-1h9.200a1 1 0 0 1 1 1V5" stroke="#9aa0a6" stroke-width="1.300" fill="none"/><path d="M6.300 6l8 3.100-3.300 1.300 3 3-1.300 1.300-3-3-1.300 3.300z" fill="#9aa0a6"/></svg>
<svg class="abs" style="left:36px;top:4px" width="18" height="18" viewBox="0 0 18 18"><path d="M5 6.500V2.700a1 1 0 0 1 1-1h9.200a1 1 0 0 1 1 1v12.600a1 1 0 0 1-1 1H9" stroke="#9aa0a6" stroke-width="1.300" fill="none"/><rect x="1.700" y="7.500" width="6.200" height="8.800" rx=".8" stroke="#9aa0a6" stroke-width="1.300" fill="none"/></svg>
<div class="vsep" style="left:63px;top:6px;height:15px"></div>
<div class="t" style="left:81.6px;top:3px;color:#c4c4c4">Elements</div>
<div class="t" style="left:154.6px;top:3px;color:#c4c4c4">Console</div>
<div class="t" style="left:222.5px;top:3px;color:#c4c4c4">Sources</div>
<div class="t" style="left:359.7px;top:3px;color:#c4c4c4">Performance</div>
<div class="t" style="left:452.3px;top:3px;color:#c4c4c4">Memory</div>
<div class="t" style="left:520.5px;top:3px;color:#c4c4c4">Application</div>
<div class="t" style="left:604.5px;top:3px;color:#c4c4c4">Security</div>
<div class="t" style="left:671.4px;top:3px;color:#c4c4c4">Audits</div>
<div class="t" style="left:290.4px;top:3px;color:#fff">Network</div>
<div class="vsep" style="left:938px;top:6px;height:15px"></div>
<svg class="abs" style="left:955px;top:5px" width="4" height="16" viewBox="0 0 4 16"><circle cx="2" cy="2.500" r="1.500" fill="#b0b0b0"/><circle cx="2" cy="8" r="1.500" fill="#b0b0b0"/><circle cx="2" cy="13.500" r="1.500" fill="#b0b0b0"/></svg>
<svg class="abs" style="left:979px;top:7px" width="12" height="12" viewBox="0 0 12 12"><path d="M1.500 1.500l9 9M10.500 1.500l-9 9" stroke="#b8b8b8" stroke-width="1.600" fill="none"/></svg>
<div class="bar" style="top:27px;height:27px;border-bottom:1px solid #474747"></div>
<div class="abs" style="left:10.100px;top:33px;width:14px;height:14px;border-radius:50%;background:#f6504f;box-shadow:0 0 0 1px #6a2a2a"></div>
<svg class="abs" style="left:38px;top:33px" width="15" height="15" viewBox="0 0 15 15"><circle cx="7.400" cy="7.400" r="5.800" stroke="#949494" stroke-width="1.700" fill="none"/><path d="M3.300 3.300l8.200 8.200" stroke="#949494" stroke-width="1.700"/></svg>
<div class="vsep" style="left:63px;top:33px;height:15px"></div>
<svg class="abs" style="left:74px;top:34px" width="16" height="14" viewBox="0 0 16 14"><path d="M1.300 1.300h13.400l-4.700 5.400v5.300a1 1 0 0 1-1 1h-2a1 1 0 0 1-1-1V6.700z" fill="#3a2426" stroke="#f6504f" stroke-width="1.400" stroke-linejoin="round"/><path d="M6.200 7h3.600v5.800H6.200z" fill="#b03a3c"/></svg>
<svg class="abs" style="left:102px;top:33px" width="15" height="15" viewBox="0 0 15 15"><circle cx="6.300" cy="6.600" r="4.500" stroke="#949494" stroke-width="1.600" fill="none"/><path d="M9.600 10l4 4" stroke="#949494" stroke-width="1.900"/></svg>
<div class="vsep" style="left:128px;top:33px;height:15px"></div>
<div class="cb" style="left:138px;top:34px;border:1px solid #737373;background:#303030"></div>
<div class="t" style="left:156.5px;top:30px;">Preserve log</div>
<div class="cb" style="left:233.100px;top:34px;background:#24a0ae"><svg viewBox="0 0 12 12" width="12" height="12" style="position:absolute;left:0;top:0"><path d="M2.800 6.400l2.300 2.500 4.100-5.600" stroke="#1c1c1c" stroke-width="1.500" fill="none"/></svg></div>
<div class="t" style="left:251.3px;top:30px;">Disable cache</div>
<div class="vsep" style="left:335.700px;top:33px;height:15px"></div>
<div class="t" style="left:345.7px;top:30px;">Online</div>
<svg class="abs" style="left:408px;top:37px" width="9" height="7" viewBox="0 0 9 7"><path d="M0.500 0.500h8l-4 6z" fill="#a8a8a8"/></svg>
<div class="vsep" style="left:428px;top:33px;height:15px"></div>
<svg class="abs" style="left:441px;top:33px" width="12" height="14" viewBox="0 0 12 14"><path d="M6 1l5 5.500H8V10H4V6.500H1z" fill="#a8a8a8"/><rect x="1" y="11.800" width="10" height="1.300" fill="#a8a8a8"/></svg>
<svg class="abs" style="left:469px;top:33px" width="12" height="14" viewBox="0 0 12 14"><path d="M6 10L1 4.500h3V1h4v3.500h3z" fill="#a8a8a8"/><rect x="1" y="11.800" width="10" height="1.300" fill="#a8a8a8"/></svg>
<div class="vsep" style="left:966px;top:33px;height:15px"></div>
<svg class="abs" style="left:977px;top:32px" width="16" height="16" viewBox="0 0 24 24"><path fill="#a0a0a0" d="M19.430 12.980c.04-.32.070-.64.070-.98s-.03-.66-.07-.98l2.110-1.650c.19-.15.240-.42.120-.64l-2-3.460c-.12-.22-.39-.3-.61-.22l-2.490 1c-.52-.4-1.080-.73-1.690-.98l-.38-2.650C14.460 2.180 14.250 2 14 2h-4c-.25 0-.46.180-.49.420l-.38 2.650c-.61.250-1.170.59-1.690.98l-2.490-1c-.23-.09-.49 0-.61.220l-2 3.460c-.13.220-.07.490.12.640l2.110 1.650c-.04.320-.07.650-.07.980s.3.660.07.980l-2.110 1.650c-.19.150-.24.420-.12.640l2 3.460c.12.220.39.300.61.220l2.490-1c.52.400 1.080.73 1.690.98l.38 2.650c.3.240.24.420.49.420h4c.25 0 .46-.18.490-.42l.38-2.650c.61-.25 1.170-.59 1.690-.98l2.490 1c.23.090.49 0 .61-.22l2-3.460c.12-.22.070-.49-.12-.64l-2.110-1.650zM12 15.500c-1.930 0-3.500-1.570-3.500-3.500s1.570-3.500 3.500-3.500 3.500 1.570 3.500 3.500-1.570 3.500-3.500 3.500z"/></svg>
<div class="bar" style="top:54px;height:25px;border-bottom:1px solid #474747"></div>
<div class="abs" style="left:5px;top:57.500px;width:163px;height:17.500px;background:#262626"></div>
<div class="t" style="left:8px;top:56px;color:#868686">Filter</div>
<div class="cb" style="left:180.200px;top:60.100px;background:#24a0ae"><svg viewBox="0 0 12 12" width="12" height="12" style="position:absolute;left:0;top:0"><path d="M2.800 6.400l2.300 2.500 4.100-5.600" stroke="#1c1c1c" stroke-width="1.500" fill="none"/></svg></div>
<div class="t" style="left:198.3px;top:56px;">Hide data URLs</div>
<div class="abs" style="left:288.500px;top:57px;width:19px;height:18px;border-radius:5px;background:#727272"></div>
<div class="t" style="left:292.3px;top:56px;color:#0c0c0c">All</div>
<div class="vsep" style="left:312px;top:59px;height:14px"></div>
<div class="t" style="left:320px;top:56px;">XHR</div>
<div class="t" style="left:354.3px;top:56px;">JS</div>
<div class="t" style="left:378.5px;top:56px;">CSS</div>
<div class="t" style="left:412.5px;top:56px;">Img</div>
<div class="t" style="left:443.4px;top:56px;">Media</div>
<div class="t" style="left:486.5px;top:56px;">Font</div>
<div class="t" style="left:520.5px;top:56px;">Doc</div>
<div class="t" style="left:552px;top:56px;">WS</div>
<div class="t" style="left:581.6px;top:56px;">Manifest</div>
<div class="t" style="left:636.9px;top:56px;">Other</div>
<div class="t" style="left:10.4px;top:82px;font-size:10px;color:#e2e5ea;text-shadow:0 0 .4px #e2e5ea">311 ms</div>
<div class="abs" style="left:7px;top:103px;width:39.200px;height:50px;background:#fff;overflow:hidden"><div class="abs" style="left:1px;top:2px;width:17px;height:2px;background:#22c"></div><div class="abs" style="left:1px;top:6.500px;width:24px;height:1px;background:#999"></div><div class="abs" style="left:1px;top:9px;width:14px;height:2.500px;border:.5px solid #777"></div><div class="abs" style="left:16px;top:9px;width:9px;height:2.500px;background:#11e"></div><svg class="abs" style="left:1px;top:13px" width="38" height="29.500" viewBox="0 0 504 390" preserveAspectRatio="none"><rect width="504" height="390" fill="#c8607a"/><use href="#cg"/></svg><div class="abs" style="left:1px;top:44px;width:18px;height:1px;background:#999"></div><div class="abs" style="left:1px;top:47px;width:16px;height:1px;background:#888"></div></div>
<div class="abs" style="left:1px;top:161px;width:999px;height:1px;background:#3f3f3f"></div>
<div class="abs" style="left:152.3px;top:162px;width:1px;height:80px;background:#3d3d3d"></div>
<div class="t" style="left:89.30000000000001px;top:162px;width:60px;text-align:right;font-size:10px;color:#d0d0d0">50 ms</div>
<div class="abs" style="left:303.2px;top:162px;width:1px;height:80px;background:#3d3d3d"></div>
<div class="t" style="left:240.2px;top:162px;width:60px;text-align:right;font-size:10px;color:#d0d0d0">100 ms</div>
<div class="abs" style="left:454px;top:162px;width:1px;height:80px;background:#3d3d3d"></div>
<div class="t" style="left:391px;top:162px;width:60px;text-align:right;font-size:10px;color:#d0d0d0">150 ms</div>
<div class="abs" style="left:605.3px;top:162px;width:1px;height:80px;background:#3d3d3d"></div>
<div class="t" style="left:542.3px;top:162px;width:60px;text-align:right;font-size:10px;color:#d0d0d0">200 ms</div>
<div class="abs" style="left:756.2px;top:162px;width:1px;height:80px;background:#3d3d3d"></div>
<div class="t" style="left:693.2px;top:162px;width:60px;text-align:right;font-size:10px;color:#d0d0d0">250 ms</div>
<div class="abs" style="left:907.2px;top:162px;width:1px;height:80px;background:#3d3d3d"></div>
<div class="t" style="left:844.2px;top:162px;width:60px;text-align:right;font-size:10px;color:#d0d0d0">300 ms</div>
<div class="abs" style="left:1.500px;top:162px;width:2px;height:18px;background:#555"></div>
<div class="abs" style="left:998px;top:162px;width:3px;height:18px;background:#666"></div>
<div class="abs" style="left:2px;top:185.700px;width:406px;height:2px;background:#0ac250"></div>
<div class="abs" style="left:429.700px;top:185.700px;width:419px;height:2px;background:#0ac250"></div>
<div class="abs" style="left:844px;top:185.700px;width:5px;height:2px;background:#1aa0f0"></div>
<div class="abs" style="left:429.700px;top:188.800px;width:70px;height:2px;background:#0ac250"></div>
<div class="abs" style="left:499px;top:188.800px;width:36.500px;height:2px;background:#1aa0f0"></div>
<div class="abs" style="left:429.700px;top:192px;width:80px;height:2px;background:#0ac250"></div>
<div class="abs" style="left:509px;top:192px;width:6.700px;height:2px;background:#1aa0f0"></div>
<div class="abs" style="left:429.700px;top:194.8px;width:80px;height:2px;background:#0ac250"></div>
<div class="abs" style="left:509px;top:194.8px;width:6.700px;height:2px;background:#1aa0f0"></div>
<div class="abs" style="left:429px;top:185.700px;width:7px;height:11px;background:repeating-linear-gradient(#bbb 0 2px,transparent 2px 3.050px)"></div>
<div class="abs" style="left:437px;top:182px;width:1.500px;height:60px;background:#1aa0f0"></div>
<div class="abs" style="left:856px;top:182px;width:1.500px;height:60px;background:#e0504e"></div>
<div class="bar" style="top:242px;height:28px;border-top:1px solid #474747;border-bottom:1px solid #474747"></div>
<div class="t" style="left:5px;top:246px;">Name</div>
<div class="t" style="left:237.6px;top:246px;">Status</div>
<div class="t" style="left:307.9px;top:246px;">Protocol</div>
<div class="t" style="left:377.2px;top:246px;">Domain</div>
<div class="t" style="left:445.9px;top:246px;">Type</div>
<div class="t" style="left:515px;top:246px;">Initiator</div>
<div class="t" style="left:597.9px;top:246px;">Size</div>
<div class="t" style="left:667px;top:246px;">Time</div>
<div class="t" style="left:736px;top:246px;">Priority</div>
<div class="t" style="left:806.2px;top:246px;">Waterfall</div>
<svg class="abs" style="left:982px;top:252px" width="10" height="8" viewBox="0 0 10 8"><path d="M5 .5l4.500 7h-9z" fill="#aaa"/></svg>
<div class="row" style="top:270px;background:#022958">
<div class="fi"><i style="top:3px;width:3px"></i><i style="top:3px;left:6px;width:2px"></i><i style="top:5.500px;width:6px"></i><i style="top:8px;width:3px"></i><i style="top:8px;left:6px;width:2px"></i><i style="top:10.500px;width:4px"></i></div>
<div class="t" style="left:24px;top:0px;letter-spacing:0.08px;">dark-mode-baseline.glitch.me</div>
<div class="t" style="left:237.6px;top:0px;">200</div>
<div class="t" style="left:307.9px;top:0px;">h2</div>
<div class="t" style="left:377.2px;top:0px;">dark-mo…</div>
<div class="t" style="left:445.9px;top:0px;">document</div>
<div class="t" style="left:515px;top:0px;color:#8a8a8a">Other</div>
<div class="t" style="left:557.900px;top:0px;width:100px;text-align:right">1.8 KB</div>
<div class="t" style="left:626.700px;top:0px;width:100px;text-align:right">134 ms</div>
<div class="t" style="left:736px;top:0px">Highest</div>
</div>
<div class="row" style="top:291px;background:#242424">
<div class="fi"><i style="top:3px;width:3px"></i><i style="top:3px;left:6px;width:2px"></i><i style="top:5.500px;width:6px"></i><i style="top:8px;width:3px"></i><i style="top:8px;left:6px;width:2px"></i><i style="top:10.500px;width:4px"></i></div>
<div class="t" style="left:24px;top:0px;">style.css</div>
<div class="t" style="left:237.6px;top:0px;">200</div>
<div class="t" style="left:307.9px;top:0px;">h2</div>
<div class="t" style="left:377.2px;top:0px;">dark-mo…</div>
<div class="t" style="left:445.9px;top:0px;">stylesheet</div>
<div class="t" style="left:515px;top:0px;"><span style="text-decoration:underline">(index)</span></div>
<div class="t" style="left:557.900px;top:0px;width:100px;text-align:right">1.4 KB</div>
<div class="t" style="left:626.700px;top:0px;width:100px;text-align:right">138 ms</div>
<div class="t" style="left:736px;top:0px">Highest</div>
</div>
<div class="row" style="top:312px;background:#2b2b2b">
<div class="fi"><i style="top:3px;width:3px"></i><i style="top:3px;left:6px;width:2px"></i><i style="top:5.500px;width:6px"></i><i style="top:8px;width:3px"></i><i style="top:8px;left:6px;width:2px"></i><i style="top:10.500px;width:4px"></i></div>
<div class="t" style="left:24px;top:0px;">light.css</div>
<div class="t" style="left:237.6px;top:0px;">200</div>
<div class="t" style="left:307.9px;top:0px;">h2</div>
<div class="t" style="left:377.2px;top:0px;">dark-mo…</div>
<div class="t" style="left:445.9px;top:0px;">stylesheet</div>
<div class="t" style="left:515px;top:0px;"><span style="text-decoration:underline">(index)</span></div>
<div class="t" style="left:557.900px;top:0px;width:100px;text-align:right">529 B</div>
<div class="t" style="left:626.700px;top:0px;width:100px;text-align:right">130 ms</div>
<div class="t" style="left:736px;top:0px">Highest</div>
</div>
<div class="row" style="top:333px;background:#242424">
<div class="fi"><div class="abs" style="left:1px;top:3px;width:8px;height:8px;background:#c8604a"></div><div class="abs" style="left:3px;top:5px;width:4px;height:4px;background:#e09a70"></div></div>
<div class="t" style="left:24px;top:0px;letter-spacing:0.16px;">791b2241-459b-4a2e-8cca-c0fdc2…</div>
<div class="t" style="left:237.6px;top:0px;">200</div>
<div class="t" style="left:307.9px;top:0px;">http/1.1</div>
<div class="t" style="left:377.2px;top:0px;">cdn.glitc…</div>
<div class="t" style="left:445.9px;top:0px;">jpeg</div>
<div class="t" style="left:515px;top:0px;"><span style="text-decoration:underline">(index)</span></div>
<div class="t" style="left:557.900px;top:0px;width:100px;text-align:right">310 KB</div>
<div class="t" style="left:626.700px;top:0px;width:100px;text-align:right">34 ms</div>
<div class="t" style="left:736px;top:0px">Low</div>
</div>
<div class="row" style="top:354px;background:#2b2b2b">
<div class="fi"><div class="abs" style="left:3px;top:5.500px;width:4.500px;height:4.500px;border-radius:50%;background:#000"></div><div class="abs" style="left:4px;top:3px;width:2.500px;height:3px;background:#000"></div></div>
<div class="t" style="left:24px;top:0px;letter-spacing:0.16px;">791b2241-459b-4a2e-8cca-c0fdc2…</div>
<div class="t" style="left:237.6px;top:0px;">200</div>
<div class="t" style="left:307.9px;top:0px;">http/1.1</div>
<div class="t" style="left:377.2px;top:0px;">cdn.glitc…</div>
<div class="t" style="left:445.9px;top:0px;">svg+xml</div>
<div class="t" style="left:515px;top:0px;"><span style="text-decoration:underline">(index)</span></div>
<div class="t" style="left:557.900px;top:0px;width:100px;text-align:right">955 B</div>
<div class="t" style="left:626.700px;top:0px;width:100px;text-align:right">27 ms</div>
<div class="t" style="left:736px;top:0px">Low</div>
</div>
<div class="row" style="top:375px;background:#242424">
<div class="fi"><div class="abs" style="left:3px;top:4.500px;width:4.500px;height:4.500px;border-radius:50%;background:#000"></div><div class="abs" style="left:1.500px;top:3px;width:7.500px;height:7.500px;border-radius:50%;border:1px dotted #000"></div></div>
<div class="t" style="left:24px;top:0px;letter-spacing:0.16px;">791b2241-459b-4a2e-8cca-c0fdc2…</div>
<div class="t" style="left:237.6px;top:0px;">200</div>
<div class="t" style="left:307.9px;top:0px;">http/1.1</div>
<div class="t" style="left:377.2px;top:0px;">cdn.glitc…</div>
<div class="t" style="left:445.9px;top:0px;">svg+xml</div>
<div class="t" style="left:515px;top:0px;"><span style="text-decoration:underline">(index)</span></div>
<div class="t" style="left:557.900px;top:0px;width:100px;text-align:right">1.0 KB</div>
<div class="t" style="left:626.700px;top:0px;width:100px;text-align:right">27 ms</div>
<div class="t" style="left:736px;top:0px">Low</div>
</div>
<div class="row" style="top:396px;background:#2b2b2b">
<div class="fi"><i style="top:3px;width:3px"></i><i style="top:3px;left:6px;width:2px"></i><i style="top:5.500px;width:6px"></i><i style="top:8px;width:3px"></i><i style="top:8px;left:6px;width:2px"></i><i style="top:10.500px;width:4px"></i></div>
<div class="t" style="left:24px;top:0px;">dark.css</div>
<div class="t" style="left:237.6px;top:0px;">200</div>
<div class="t" style="left:307.9px;top:0px;">h2</div>
<div class="t" style="left:377.2px;top:0px;">dark-mo…</div>
<div class="t" style="left:445.9px;top:0px;">stylesheet</div>
<div class="t" style="left:515px;top:0px;"><span style="text-decoration:underline">(index)</span></div>
<div class="t" style="left:557.900px;top:0px;width:100px;text-align:right">530 B</div>
<div class="t" style="left:626.700px;top:0px;width:100px;text-align:right">136 ms</div>
<div class="t" style="left:736px;top:0px">Lowest</div>
</div>
<div class="col" style="left:233.5px"></div>
<div class="col" style="left:303.2px"></div>
<div class="col" style="left:372.2px"></div>
<div class="col" style="left:441.2px"></div>
<div class="col" style="left:510.2px"></div>
<div class="col" style="left:593.3px"></div>
<div class="col" style="left:662.5px"></div>
<div class="col" style="left:731.3px"></div>
<div class="col" style="left:801px;background:#555"></div>
<div class="abs" style="left:867.2px;top:270px;width:1px;height:363px;background:#3a3a3a"></div>
<div class="abs" style="left:932.2px;top:270px;width:1px;height:363px;background:#3a3a3a"></div>
<div class="abs" style="left:897.200px;top:270px;width:1.300px;height:363px;background:#2563a8"></div>
<div class="abs" style="left:986.300px;top:270px;width:1px;height:363px;background:#6a2a2a"></div>
<div class="abs" style="left:986.800px;top:270px;width:13.500px;height:363px;background:#323232;border:1px solid #454545;border-bottom:0;border-radius:3px 3px 0 0"></div>
<div class="abs" style="left:805.500px;top:276.7px;width:1.500px;height:7px;background:#b8b8b8"></div>
<div class="bar2" style="left:806.6px;top:274.2px;width:85.4px;background:#0ac250"></div>
<div class="bar2" style="left:892px;top:274.2px;width:1.2px;background:#1aa0f0"></div>
<div class="abs" style="left:897.300px;top:298.0px;width:1.800px;height:7px;background:#c8c8c8"></div>
<div class="bar2" style="left:898.7px;top:295.2px;width:86.3px;background:#0ac250"></div>
<div class="bar2" style="left:985px;top:295.2px;width:1px;background:#1aa0f0"></div>
<div class="abs" style="left:897.300px;top:319.0px;width:1.800px;height:7px;background:#c8c8c8"></div>
<div class="bar2" style="left:898.7px;top:316.2px;width:81.3px;background:#0ac250"></div>
<div class="bar2" style="left:980px;top:316.2px;width:1px;background:#1aa0f0"></div>
<div class="abs" style="left:897.300px;top:340.0px;width:1.800px;height:7px;background:#c8c8c8"></div>
<div class="bar2" style="left:899.3px;top:337.2px;width:12.2px;background:#0ac250"></div>
<div class="bar2" style="left:911.5px;top:337.2px;width:8.9px;background:#1aa0f0"></div>
<div class="abs" style="left:897.300px;top:361.0px;width:1.800px;height:7px;background:#c8c8c8"></div>
<div class="bar2" style="left:899.3px;top:358.2px;width:15.7px;background:#0ac250"></div>
<div class="bar2" style="left:915px;top:358.2px;width:1.4px;background:#1aa0f0"></div>
<div class="abs" style="left:897.300px;top:382.0px;width:1.800px;height:7px;background:#c8c8c8"></div>
<div class="bar2" style="left:899.3px;top:379.2px;width:15.7px;background:#0ac250"></div>
<div class="bar2" style="left:915px;top:379.2px;width:1.4px;background:#1aa0f0"></div>
<div class="abs" style="left:897.300px;top:403.0px;width:1.800px;height:7px;background:#c8c8c8"></div>
<div class="bar2" style="left:899.3px;top:400.2px;width:84.4px;background:#0ac250"></div>
<div class="bar2" style="left:983.7px;top:400.2px;width:1.3px;background:#1aa0f0"></div>
<div class="abs" style="left:-0.400px;top:392.300px;width:996px;height:26.700px;border:5.300px solid #ffff00;border-radius:13.400px;z-index:6"></div>
<svg class="abs" style="left:715.500px;top:413px" width="110" height="80" viewBox="0 0 1170 851">
<path d="M520 520C560 600 700 640 820 590L830 560L600 500Z" fill="#2f5232"/>
<path d="M845 515L905 535Q915 550 900 560L840 560Z" fill="#93a14a"/>
<path d="M330 560Q360 540 395 560L400 640Q380 690 330 680Q300 670 320 640Z" fill="#7f8d3c"/>
<path d="M800 590Q850 580 870 620L885 660Q870 685 820 680L790 640Z" fill="#7f8d3c"/>
<path d="M285 215Q330 235 372 200L385 330Q395 420 440 500L350 505Q300 430 290 340Z" fill="#8e9d44"/>
<path d="M310 380Q340 360 380 400L400 480L345 490Z" fill="#7b8a3a"/>
<path d="M195 160Q200 110 270 100Q350 95 375 150Q385 200 340 225Q290 245 240 220Q190 200 195 160Z" fill="#93a34a"/>
<path d="M200 185Q240 215 300 200" stroke="#75843a" stroke-width="8" fill="none"/>
<circle cx="284" cy="138" r="19" fill="#0a0a08"/>
<path d="M378 325C420 270 560 238 660 268C770 300 850 380 878 450C850 540 760 590 670 585C560 575 440 490 378 325Z" fill="#4c9560"/>
<path d="M420 310C470 275 560 255 650 275C740 300 810 360 840 430C800 500 720 540 650 535C560 525 470 440 420 310Z" fill="#5aa56e" opacity=".7"/>
<g stroke="#3d7a4c" stroke-width="7" fill="none">
<path d="M520 285L545 340L640 345L660 275"/><path d="M545 340L500 420L430 400"/><path d="M640 345L700 385L770 340"/><path d="M500 420L540 500"/><path d="M500 420L600 395L700 385"/><path d="M700 385L720 470L790 500"/><path d="M600 395L640 480L720 470"/><path d="M640 480L620 560"/><path d="M720 470L740 570"/>
</g>
<path d="M378 325C410 440 520 560 690 580C780 585 850 530 880 450" stroke="#3b7a50" stroke-width="20" fill="none" stroke-linecap="round"/>
<path d="M390 500Q440 480 495 505L505 600Q515 680 470 700Q410 705 385 680Q395 620 385 560Z" fill="#9aa84c"/>
<path d="M655 620Q720 590 790 610L800 670Q760 705 680 700Q630 690 655 620Z" fill="#9aa84c"/>
<path d="M320 650Q350 640 385 660L380 690Q340 690 315 675Z" fill="#a3b052"/>
</svg>

<div class="bar" style="top:633px;height:27px;border-top:1px solid #474747;border-bottom:1px solid #454545"></div>
<div class="t" style="left:11.1px;top:637.3px;color:#c4c4c4">7 requests</div>
<div class="t" style="left:85.7px;top:637.3px;color:#c4c4c4">316 KB transferred</div>
<div class="t" style="left:206.2px;top:637.3px;color:#c4c4c4">313 KB resources</div>
<div class="t" style="left:320.6px;top:637.3px;color:#c4c4c4">Finish: 280 ms</div>
<div class="t" style="left:417.5px;top:637.3px;color:#3f9fe8">DOMContentLoaded: 144 ms</div>
<div class="t" style="left:594px;top:637.3px;color:#f0504f">Load: 282 ms</div>
<div class="vsep" style="left:76.3px;top:639px;height:15px"></div>
<div class="vsep" style="left:196.3px;top:639px;height:15px"></div>
<div class="vsep" style="left:311.2px;top:639px;height:15px"></div>
<div class="vsep" style="left:407.6px;top:639px;height:15px"></div>
<div class="vsep" style="left:584.6px;top:639px;height:15px"></div>
</div>
</div>
</body></html>
